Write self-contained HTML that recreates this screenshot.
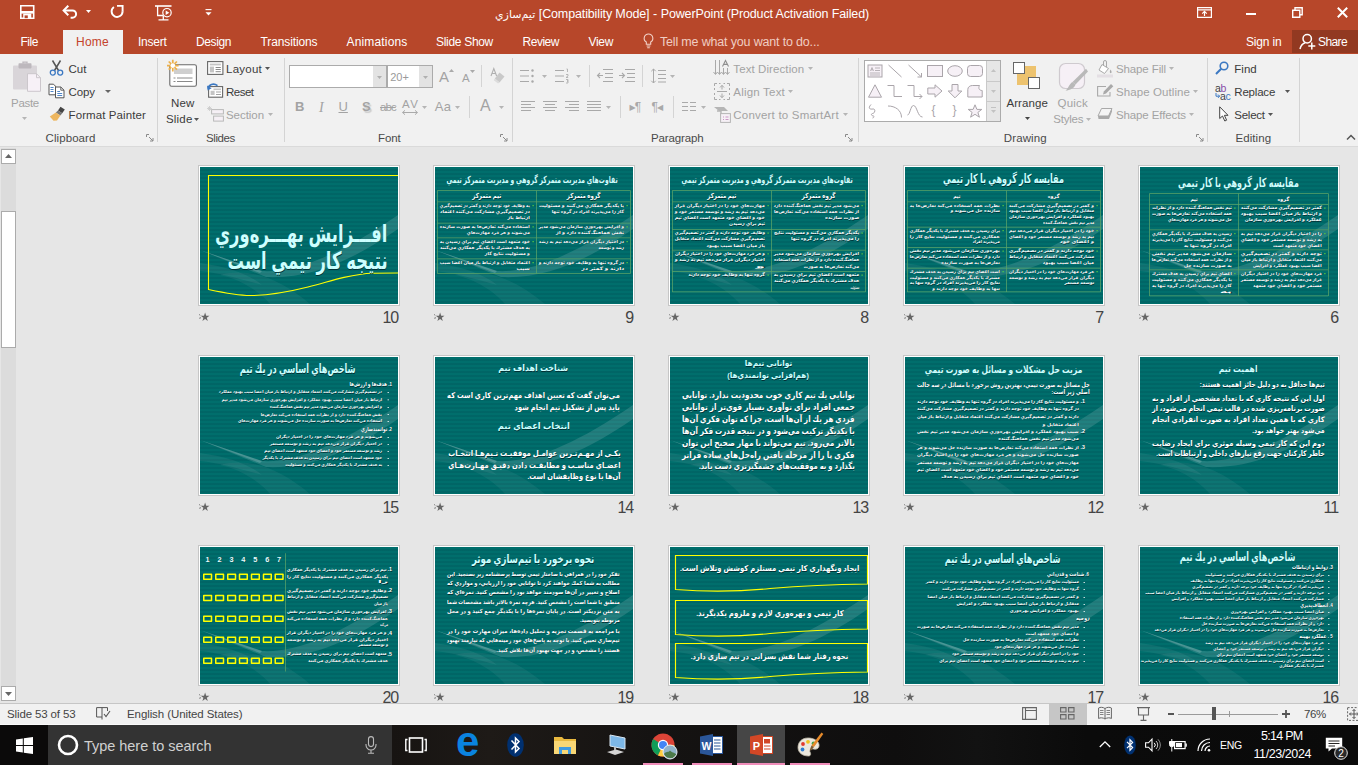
<!DOCTYPE html>
<html lang="en"><head><meta charset="utf-8"><title>PowerPoint</title>
<style>
html,body{margin:0;padding:0}
body{width:1358px;height:773px;overflow:hidden;position:relative;background:#fff;font-family:"Liberation Sans","DejaVu Sans",sans-serif;font-size:12px;color:#262626}
.a{position:absolute}
.t{position:absolute;height:20px;line-height:20px;white-space:nowrap}
.w{color:#fff}
.g{color:#a6a6a6}
.lbl{color:#444}
svg{position:absolute;overflow:visible}
.sep{position:absolute;width:1px;background:#d4d4d4}
.sl{position:absolute;width:202px;height:141px;box-sizing:border-box;border:1px solid #c6c6c6;background:#fff}
.bg{position:absolute;left:1px;top:1px;width:198px;height:137px;overflow:hidden;background:#006E6C;background-image:repeating-linear-gradient(to bottom,rgba(0,0,0,0) 0,rgba(0,0,0,0) 2px,rgba(0,30,50,.105) 2px,rgba(0,30,50,.105) 4px)}
.sw{left:0;top:0}
.in{position:absolute;left:0;top:0;width:792px;height:548px;transform:scale(.25);transform-origin:0 0;direction:rtl;font-family:"Liberation Sans","DejaVu Sans",sans-serif;font-weight:bold}
.s{position:absolute;white-space:nowrap;text-shadow:2px 2px 1px rgba(0,40,45,.85)}
.star{position:absolute;font-size:11px;line-height:12px;color:#555;font-family:"DejaVu Sans",sans-serif}
.num{position:absolute;width:100px;text-align:right;font-size:16px;line-height:20px;color:#444;letter-spacing:-1.1px}

</style></head>
<body>
<div class="a" style="left:0px;top:0px;width:1358px;height:54px;background:#B7472A"></div>
<svg style="left:20px;top:5px" width="14.5" height="14" viewBox="0 0 14.5 14"><path d="M0.8 0.8H13.7V13.2H0.8Z" fill="none" stroke="#fff" stroke-width="1.6"/><rect x="0.8" y="6" width="12.9" height="2.6" fill="#fff"/><path d="M3.2 8.6H11.3V13.2H3.2Z" fill="#fff"/><rect x="4.6" y="10.4" width="3.2" height="2.8" fill="#B7472A"/></svg>
<svg style="left:62px;top:4px" width="17" height="15" viewBox="0 0 17 15"><path d="M2 6.5H10.5A3.6 3.6 0 0 1 10.5 13.7H8.6" fill="none" stroke="#fff" stroke-width="2"/><path d="M6.3 1.7L1.6 6.5L6.3 11.3" fill="none" stroke="#fff" stroke-width="2"/></svg>
<svg style="left:86px;top:10px" width="5" height="3" viewBox="0 0 5 3"><path d="M0 0H5 L2.5 3Z" fill="#fff"/></svg>
<svg style="left:109px;top:4px" width="16" height="15" viewBox="0 0 16 15"><path d="M4.9 2.9A5.5 5.5 0 1 0 13.6 7.3" fill="none" stroke="#fff" stroke-width="1.9"/><path d="M8 1.9H13.6V7.5" fill="none" stroke="#fff" stroke-width="1.9"/></svg>
<svg style="left:155px;top:4.5px" width="18" height="16" viewBox="0 0 18 16"><path d="M0 1H16.5" stroke="#fff" stroke-width="1.6"/><path d="M2.6 1V10.5H8 M8.3 10.5V14.5 M3.5 14.8H13.5" fill="none" stroke="#fff" stroke-width="1.3"/><circle cx="12" cy="7.7" r="4.2" fill="#B7472A" stroke="#fff" stroke-width="1.2"/><path d="M10.7 5.5L14.3 7.7L10.7 9.9Z" fill="#fff"/></svg>
<svg style="left:205px;top:9px" width="7" height="8" viewBox="0 0 7 8"><path d="M0.5 0.6H6.5" stroke="#fff" stroke-width="1.1"/><path d="M0.5 3.2H6.5L3.5 6.4Z" fill="#fff"/></svg>
<span class="t" style="left:495.0px;top:4.0px;font-size:12.5px;letter-spacing:-0.130px;color:#fff;direction:ltr"><span style="font-size:11px;letter-spacing:0">تيم‌سازي</span> [Compatibility Mode] - PowerPoint (Product Activation Failed)</span>
<svg style="left:1197px;top:7px" width="15" height="11" viewBox="0 0 15 11"><path d="M0.6 0.6H14.4V10.4H0.6Z M0.6 2.8H14.4" fill="none" stroke="#fff" stroke-width="1.2"/><path d="M7.5 9V4.6 M5.2 6.6L7.5 4.4L9.8 6.6" fill="none" stroke="#fff" stroke-width="1.2"/></svg>
<div class="a" style="left:1246px;top:13px;width:10px;height:2px;background:#fff"></div>
<svg style="left:1292px;top:7px" width="11" height="11" viewBox="0 0 11 11"><path d="M0.7 3.2H7.8V10.3H0.7Z" fill="none" stroke="#fff" stroke-width="1.4"/><path d="M3 3V0.8H10.2V7.8H8" fill="none" stroke="#fff" stroke-width="1.4"/></svg>
<svg style="left:1337px;top:7px" width="11" height="11" viewBox="0 0 11 11"><path d="M0.8 0.8L10.2 10.2M10.2 0.8L0.8 10.2" stroke="#fff" stroke-width="2"/></svg>
<div class="a" style="left:63px;top:30px;width:60px;height:24px;background:#F1F1F1"></div>
<span class="t" style="left:20.5px;top:32.0px;font-size:12px;letter-spacing:-0.479px;color:#fff">File</span>
<span class="t" style="left:76.0px;top:32.0px;font-size:12px;letter-spacing:0.255px;color:#C4432B">Home</span>
<span class="t" style="left:138.0px;top:32.0px;font-size:12px;letter-spacing:-0.256px;color:#fff">Insert</span>
<span class="t" style="left:196.0px;top:32.0px;font-size:12px;letter-spacing:-0.397px;color:#fff">Design</span>
<span class="t" style="left:260.5px;top:32.0px;font-size:12px;letter-spacing:-0.113px;color:#fff">Transitions</span>
<span class="t" style="left:346.5px;top:32.0px;font-size:12px;letter-spacing:0.163px;color:#fff">Animations</span>
<span class="t" style="left:436.0px;top:32.0px;font-size:12px;letter-spacing:-0.306px;color:#fff">Slide Show</span>
<span class="t" style="left:522.5px;top:32.0px;font-size:12px;letter-spacing:-0.481px;color:#fff">Review</span>
<span class="t" style="left:588.5px;top:32.0px;font-size:12px;letter-spacing:-0.333px;color:#fff">View</span>
<svg style="left:643px;top:33px" width="11" height="16" viewBox="0 0 11 16"><path d="M5.5 1A4.3 4.3 0 0 0 3.3 9V11.2H7.7V9A4.3 4.3 0 0 0 5.5 1Z M3.6 13H7.4 M4.2 14.8H6.8" fill="none" stroke="#f3d3c9" stroke-width="1.1"/></svg>
<span class="t" style="left:660.0px;top:32.0px;font-size:12.5px;letter-spacing:-0.173px;color:#f0cdc3">Tell me what you want to do...</span>
<span class="t" style="left:1246.0px;top:32.0px;font-size:12px;letter-spacing:-0.172px;color:#fff">Sign in</span>
<div class="a" style="left:1292px;top:30px;width:66px;height:23px;background:#923921"></div>
<svg style="left:1299px;top:33px" width="17" height="17" viewBox="0 0 17 17"><circle cx="8.2" cy="5.8" r="4.2" fill="none" stroke="#fff" stroke-width="1.5"/><path d="M1 16C2 12 4.5 10.3 6.2 9.8" fill="none" stroke="#fff" stroke-width="1.5"/><path d="M12.8 9.5V16.5M9.3 13H16.3" stroke="#fff" stroke-width="1.5"/></svg>
<span class="t" style="left:1318.0px;top:32.0px;font-size:12px;letter-spacing:-0.617px;color:#fff">Share</span>
<div class="a" style="left:0px;top:54px;width:1358px;height:92px;background:#F1F1F1"></div>
<div class="a" style="left:0px;top:146px;width:1358px;height:1px;background:#DADADA"></div>
<div class="a" style="left:157px;top:58px;width:1px;height:84px;background:#D4D4D4"></div>
<div class="a" style="left:284px;top:58px;width:1px;height:84px;background:#D4D4D4"></div>
<div class="a" style="left:512px;top:58px;width:1px;height:84px;background:#D4D4D4"></div>
<div class="a" style="left:858px;top:58px;width:1px;height:84px;background:#D4D4D4"></div>
<div class="a" style="left:1207px;top:58px;width:1px;height:84px;background:#D4D4D4"></div>
<div class="a" style="left:1299px;top:58px;width:1px;height:84px;background:#D4D4D4"></div>
<span class="t" style="left:45.5px;top:128.0px;font-size:11.5px;letter-spacing:0.086px;color:#4a4a4a">Clipboard</span>
<span class="t" style="left:206.0px;top:128.0px;font-size:11.5px;letter-spacing:-0.391px;color:#4a4a4a">Slides</span>
<span class="t" style="left:378.0px;top:128.0px;font-size:11.5px;letter-spacing:-0.135px;color:#4a4a4a">Font</span>
<span class="t" style="left:651.0px;top:128.0px;font-size:11.5px;letter-spacing:-0.125px;color:#4a4a4a">Paragraph</span>
<span class="t" style="left:1003.8px;top:128.0px;font-size:11.5px;letter-spacing:0.104px;color:#4a4a4a">Drawing</span>
<span class="t" style="left:1235.5px;top:128.0px;font-size:11.5px;letter-spacing:0.077px;color:#4a4a4a">Editing</span>
<svg style="left:146px;top:134px" width="8" height="8" viewBox="0 0 8 8"><path d="M0.5 3V0.5H3 M3 3L7 7 M7 4V7H4" fill="none" stroke="#8a8a8a" stroke-width="1"/></svg>
<svg style="left:500px;top:134px" width="8" height="8" viewBox="0 0 8 8"><path d="M0.5 3V0.5H3 M3 3L7 7 M7 4V7H4" fill="none" stroke="#8a8a8a" stroke-width="1"/></svg>
<svg style="left:845px;top:134px" width="8" height="8" viewBox="0 0 8 8"><path d="M0.5 3V0.5H3 M3 3L7 7 M7 4V7H4" fill="none" stroke="#8a8a8a" stroke-width="1"/></svg>
<svg style="left:1196px;top:134px" width="8" height="8" viewBox="0 0 8 8"><path d="M0.5 3V0.5H3 M3 3L7 7 M7 4V7H4" fill="none" stroke="#8a8a8a" stroke-width="1"/></svg>
<svg style="left:1346px;top:134px" width="10" height="7" viewBox="0 0 10 7"><path d="M1 5.5L5 1.5L9 5.5" fill="none" stroke="#555" stroke-width="1.5"/></svg>
<svg style="left:12px;top:61px" width="30" height="32" viewBox="0 0 30 32"><rect x="1" y="4.5" width="24" height="24" rx="1" fill="#D9D5D9"/><rect x="6.5" y="2.2" width="13" height="5.2" rx="0.8" fill="#BDB8BD"/><path d="M11 2.5V1.2H15V2.5" fill="none" stroke="#BDB8BD" stroke-width="1.3"/><path d="M15.5 12.7H24.5L28.5 16.7V30.3H15.5Z" fill="#F7F1F7" stroke="#CCC7CC" stroke-width="1"/><path d="M24.5 12.7V16.7H28.5" fill="none" stroke="#CCC7CC" stroke-width="1"/></svg>
<span class="t" style="left:11.0px;top:93.0px;font-size:11.5px;letter-spacing:-0.285px;color:#a3a3a3">Paste</span>
<svg style="left:22px;top:116.5px" width="5" height="3" viewBox="0 0 5 3"><path d="M0 0H5 L2.5 3Z" fill="#b5b5b5"/></svg>
<svg style="left:49px;top:60px" width="15" height="16" viewBox="0 0 15 16"><path d="M3.5 0.5L9.5 10.5 M11.5 0.5L5.5 10.5" stroke="#555" stroke-width="1.5"/><circle cx="3.8" cy="12.6" r="2.5" fill="none" stroke="#3B78C2" stroke-width="1.3"/><circle cx="11.2" cy="12.6" r="2.5" fill="none" stroke="#3B78C2" stroke-width="1.3"/></svg>
<span class="t" style="left:68.5px;top:59.0px;font-size:11.5px;letter-spacing:0.039px;color:#3b3b3b">Cut</span>
<svg style="left:48px;top:83px" width="17" height="16" viewBox="0 0 17 16"><path d="M1 1.2H5.5L7.5 3.2V11.8H1Z" fill="#fff" stroke="#555" stroke-width="1"/><path d="M2.5 4.5H5.5M2.5 6.5H5.5M2.5 8.5H5.5" stroke="#3B78C2" stroke-width="0.9"/><path d="M7.5 4H12.8L16 7.2V14.8H7.5Z" fill="#fff" stroke="#555" stroke-width="1"/><path d="M12.8 4V7.2H16" fill="none" stroke="#555" stroke-width="0.9"/><path d="M9.3 8.5H12M9.3 10.5H14.2M9.3 12.5H14.2" stroke="#3B78C2" stroke-width="0.9"/></svg>
<span class="t" style="left:68.5px;top:82.0px;font-size:11.5px;letter-spacing:-0.094px;color:#3b3b3b">Copy</span>
<svg style="left:105px;top:90px" width="6" height="3" viewBox="0 0 6 3"><path d="M0 0H6 L3 3Z" fill="#666"/></svg>
<svg style="left:49px;top:106px" width="17" height="16" viewBox="0 0 17 16"><path d="M11.5 0.8L15.8 3.6L13.2 7.2L9 4.4Z" fill="#444"/><path d="M9 4.4L13.2 7.2L11.4 9.4L6.8 6.6Z" fill="#777"/><path d="M6.8 6.6L11.4 9.4L8 14.5L4.5 14.8L0.8 10.4Z" fill="#EDB65F"/></svg>
<span class="t" style="left:68.5px;top:105.0px;font-size:11.5px;letter-spacing:0.103px;color:#3b3b3b">Format Painter</span>
<svg style="left:165px;top:59px" width="34" height="34" viewBox="0 0 34 34"><rect x="4.8" y="5.8" width="26.6" height="21.4" rx="1.8" fill="#fff" stroke="#6a6a6a" stroke-width="1.1"/><rect x="9" y="9.5" width="18.5" height="5.5" fill="#cfcfcf"/><path d="M8.5 19H10.5 M12 19H27.5 M8.5 22.5H10.5 M12 22.5H27.5" stroke="#8a8a8a" stroke-width="1"/><g stroke="#EDB04A" stroke-width="1.7"><path d="M7.8 0.8V12.4M2 6.6H13.6M3.7 2.5L11.9 10.7M11.9 2.5L3.7 10.7"/></g><circle cx="7.8" cy="6.6" r="2.3" fill="#fff"/></svg>
<span class="t" style="left:171.0px;top:93.0px;font-size:11.5px;letter-spacing:0.180px;color:#3b3b3b">New</span>
<span class="t" style="left:166.0px;top:109.0px;font-size:11.5px;letter-spacing:0.188px;color:#3b3b3b">Slide</span>
<svg style="left:194px;top:117.5px" width="5" height="3" viewBox="0 0 5 3"><path d="M0 0H5 L2.5 3Z" fill="#555"/></svg>
<svg style="left:207px;top:61px" width="17" height="14" viewBox="0 0 17 14"><rect x="0.6" y="0.6" width="15.3" height="12.8" fill="#fff" stroke="#666" stroke-width="1.1"/><rect x="2.8" y="2.6" width="11" height="1.8" fill="#c4c4c4"/><rect x="2.8" y="5.6" width="4.2" height="5.8" fill="#c4c4c4"/><path d="M8.6 6.5H13.8 M8.6 8.5H13.8 M8.6 10.7H13.8" stroke="#8a8a8a" stroke-width="1"/></svg>
<span class="t" style="left:226.0px;top:59.0px;font-size:11.5px;letter-spacing:0.247px;color:#3b3b3b">Layout</span>
<svg style="left:265px;top:67px" width="5" height="3" viewBox="0 0 5 3"><path d="M0 0H5 L2.5 3Z" fill="#555"/></svg>
<svg style="left:207px;top:82px" width="17" height="16" viewBox="0 0 17 16"><rect x="1.6" y="4.6" width="14" height="10.6" fill="#fff" stroke="#666" stroke-width="1.1"/><rect x="6.5" y="6.5" width="7.5" height="1.6" fill="#c4c4c4"/><rect x="3.6" y="8.8" width="4" height="4.2" fill="#c4c4c4"/><path d="M9 10H14 M9 12.5H14" stroke="#999" stroke-width="0.9"/><path d="M1.3 6.5C1.5 2.5 6.5 0.8 10.5 3.6" fill="none" stroke="#3B78C2" stroke-width="1.7"/><path d="M0 3.5L0.6 8.6L4.6 6.2Z" fill="#3B78C2"/></svg>
<span class="t" style="left:226.0px;top:82.0px;font-size:11.5px;letter-spacing:-0.520px;color:#3b3b3b">Reset</span>
<svg style="left:207px;top:106px" width="17" height="16" viewBox="0 0 17 16"><rect x="4.6" y="3.6" width="11.8" height="4.3" fill="#f6f0f6" stroke="#b9b9b9" stroke-width="1"/><rect x="6.6" y="10.1" width="9.8" height="5" fill="#f6f0f6" stroke="#b9b9b9" stroke-width="1"/><path d="M2.5 0V5M0 2.5H5M0.8 0.8L4.2 4.2M4.2 0.8L0.8 4.2" stroke="#c9c9c9" stroke-width="0.8"/></svg>
<span class="t" style="left:226.0px;top:105.0px;font-size:11.5px;letter-spacing:-0.052px;color:#a3a3a3">Section</span>
<svg style="left:268px;top:113px" width="5" height="3" viewBox="0 0 5 3"><path d="M0 0H5 L2.5 3Z" fill="#b5b5b5"/></svg>
<div class="a" style="left:289px;top:65px;width:98px;height:23px;background:#fff;border:1px solid #ababab;box-sizing:border-box"></div>
<div class="a" style="left:373px;top:66px;width:13px;height:21px;background:#e3e3e3"></div>
<svg style="left:377px;top:75.5px" width="5" height="3" viewBox="0 0 5 3"><path d="M0 0H5 L2.5 3Z" fill="#b0b0b0"/></svg>
<div class="a" style="left:387px;top:65px;width:46px;height:23px;background:#fff;border:1px solid #ababab;box-sizing:border-box"></div>
<div class="a" style="left:419px;top:66px;width:13px;height:21px;background:#e3e3e3"></div>
<svg style="left:423px;top:75.5px" width="5" height="3" viewBox="0 0 5 3"><path d="M0 0H5 L2.5 3Z" fill="#b0b0b0"/></svg>
<span class="t" style="left:390.2px;top:66.5px;font-size:11px;letter-spacing:-0.022px;color:#9a9a9a">20+</span>
<span class="t" style="left:439.0px;top:67.0px;font-size:15px;letter-spacing:0.000px;color:#a3a3a3">A</span>
<svg style="left:449px;top:69px" width="5" height="3" viewBox="0 0 5 3"><path d="M0 3H5L2.5 0Z" fill="#aaa"/></svg>
<span class="t" style="left:462.0px;top:68.0px;font-size:11.5px;letter-spacing:0.000px;color:#a3a3a3">A</span>
<svg style="left:470px;top:70px" width="5" height="3" viewBox="0 0 5 3"><path d="M0 0H5L2.5 3Z" fill="#aaa"/></svg>
<div class="a" style="left:481px;top:65px;width:1px;height:22px;background:#d4d4d4"></div>
<svg style="left:490px;top:67px" width="16" height="17" viewBox="0 0 16 17"><path d="M1 9L3.8 1.5L6.6 9M2 6.5H5.6" fill="none" stroke="#b0b0b0" stroke-width="1.1"/><path d="M9.5 5.5L14.5 9.5L9.5 15.5L4.8 11.6Z" fill="#c9c9c9"/><path d="M4.8 11.6L9.5 15.5L8 16.5L3.8 13.2Z" fill="#dcdcdc"/></svg>
<span class="t" style="left:295.0px;top:97.0px;font-size:13px;letter-spacing:0.000px;color:#a3a3a3"><b>B</b></span>
<span class="t" style="left:319.0px;top:97.0px;font-size:14px;letter-spacing:0.000px;color:#a3a3a3"><i style="font-family:'Liberation Serif',serif">I</i></span>
<span class="t" style="left:338.5px;top:97.0px;font-size:13px;letter-spacing:0.000px;color:#a3a3a3"><u>U</u></span>
<span class="t" style="left:362.0px;top:97.0px;font-size:13px;letter-spacing:0.000px;color:#a3a3a3"><b style="text-shadow:1.5px 1.5px 1px #ccc">S</b></span>
<span class="t" style="left:380.0px;top:97.0px;font-size:11.5px;letter-spacing:-0.934px;color:#a3a3a3"><s>abc</s></span>
<span class="t" style="left:402.0px;top:94.0px;font-size:11.5px;letter-spacing:1.500px;color:#a3a3a3">AV</span>
<svg style="left:402px;top:110px" width="16" height="5" viewBox="0 0 16 5"><path d="M0.5 2.5H15.5M3 0.3L0.6 2.5L3 4.7M13 0.3L15.4 2.5L13 4.7" fill="none" stroke="#aaa" stroke-width="1"/></svg>
<svg style="left:422px;top:105.5px" width="5" height="3" viewBox="0 0 5 3"><path d="M0 0H5 L2.5 3Z" fill="#b5b5b5"/></svg>
<span class="t" style="left:434.8px;top:97.0px;font-size:13px;letter-spacing:0.303px;color:#a3a3a3">Aa</span>
<svg style="left:455px;top:105.5px" width="5" height="3" viewBox="0 0 5 3"><path d="M0 0H5 L2.5 3Z" fill="#b5b5b5"/></svg>
<div class="a" style="left:469px;top:96px;width:1px;height:22px;background:#d4d4d4"></div>
<span class="t" style="left:480.0px;top:96.0px;font-size:16px;letter-spacing:0.000px;color:#a3a3a3">A</span>
<svg style="left:499px;top:105.5px" width="5" height="3" viewBox="0 0 5 3"><path d="M0 0H5 L2.5 3Z" fill="#b5b5b5"/></svg>
<svg style="left:520px;top:68px" width="16" height="16" viewBox="0 0 16 16"><path d="M0 2.5H9M0 8H9M0 13.5H9" stroke="#a9a9a9" stroke-width="1"/><circle cx="12.5" cy="2.5" r="1.2" fill="#a9a9a9"/><circle cx="12.5" cy="8" r="1.2" fill="#a9a9a9"/><circle cx="12.5" cy="13.5" r="1.2" fill="#a9a9a9"/></svg>
<svg style="left:542px;top:74.5px" width="5" height="3" viewBox="0 0 5 3"><path d="M0 0H5 L2.5 3Z" fill="#b5b5b5"/></svg>
<svg style="left:555px;top:68px" width="16" height="16" viewBox="0 0 16 16"><path d="M0 2.5H9M0 8H9M0 13.5H9" stroke="#a9a9a9" stroke-width="1"/><path d="M11.5 1H12.5V4M11 6.5H13V8L11 9.5H13.2M11 11.5H13V13H12 13V15H11" stroke="#a9a9a9" stroke-width="0.8" fill="none"/></svg>
<svg style="left:576px;top:74.5px" width="5" height="3" viewBox="0 0 5 3"><path d="M0 0H5 L2.5 3Z" fill="#b5b5b5"/></svg>
<div class="a" style="left:589px;top:65px;width:1px;height:22px;background:#d4d4d4"></div>
<svg style="left:597px;top:69px" width="16" height="14" viewBox="0 0 16 14"><path d="M6 0.5H16M8 4.5H16M8 8.5H16M6 12.5H16" stroke="#a9a9a9" stroke-width="1"/><path d="M0.5 6.5H6M3 4L0.5 6.5L3 9" fill="none" stroke="#a9a9a9" stroke-width="1.1"/></svg>
<svg style="left:619px;top:69px" width="16" height="14" viewBox="0 0 16 14"><path d="M6 0.5H16M8 4.5H16M8 8.5H16M6 12.5H16" stroke="#a9a9a9" stroke-width="1"/><path d="M0 6.5H5.5M3 4L5.5 6.5L3 9" fill="none" stroke="#a9a9a9" stroke-width="1.1"/></svg>
<div class="a" style="left:642px;top:65px;width:1px;height:22px;background:#d4d4d4"></div>
<svg style="left:651px;top:68px" width="15" height="16" viewBox="0 0 15 16"><path d="M7 2.5H15M7 6.5H15M7 10.5H15M7 14H15" stroke="#a9a9a9" stroke-width="1"/><path d="M2.5 1V15M0.3 3.2L2.5 1L4.7 3.2M0.3 12.8L2.5 15L4.7 12.8" fill="none" stroke="#a9a9a9" stroke-width="1"/></svg>
<svg style="left:670px;top:74.5px" width="5" height="3" viewBox="0 0 5 3"><path d="M0 0H5 L2.5 3Z" fill="#b5b5b5"/></svg>
<svg style="left:521px;top:100px" width="16" height="16" viewBox="0 0 16 16"><path d="M0 1.5H14M0 4.5H10M0 7.5H14M0 10.5H10" stroke="#a9a9a9" stroke-width="1" fill="none"/></svg>
<svg style="left:543px;top:100px" width="16" height="16" viewBox="0 0 16 16"><path d="M0 1.5H14M2 4.5H12M0 7.5H14M2 10.5H12" stroke="#a9a9a9" stroke-width="1" fill="none"/></svg>
<svg style="left:565px;top:100px" width="16" height="16" viewBox="0 0 16 16"><path d="M0 1.5H14M4 4.5H14M0 7.5H14M4 10.5H14" stroke="#a9a9a9" stroke-width="1" fill="none"/></svg>
<svg style="left:587px;top:100px" width="16" height="16" viewBox="0 0 16 16"><path d="M0 1.5H14M0 4.5H14M0 7.5H14M0 10.5H14" stroke="#a9a9a9" stroke-width="1" fill="none"/></svg>
<svg style="left:606px;top:105.5px" width="5" height="3" viewBox="0 0 5 3"><path d="M0 0H5 L2.5 3Z" fill="#b5b5b5"/></svg>
<div class="a" style="left:620px;top:96px;width:1px;height:22px;background:#d4d4d4"></div>
<span class="t" style="left:629.5px;top:97.0px;font-size:12px;letter-spacing:0.000px;color:#a9a9a9;letter-spacing:-1px"><span style="font-size:8px;vertical-align:1px">&#9654;</span>&#182;</span>
<span class="t" style="left:651.5px;top:97.0px;font-size:12px;letter-spacing:0.000px;color:#a9a9a9;letter-spacing:-1px">&#182;<span style="font-size:8px;vertical-align:1px">&#9664;</span></span>
<div class="a" style="left:673px;top:96px;width:1px;height:22px;background:#d4d4d4"></div>
<svg style="left:682px;top:101px" width="14" height="12" viewBox="0 0 14 12"><path d="M0 1.5H6M8 1.5H14M0 5.5H6M8 5.5H14M0 9.5H6M8 9.5H14" stroke="#a9a9a9" stroke-width="1"/></svg>
<svg style="left:701px;top:105.5px" width="5" height="3" viewBox="0 0 5 3"><path d="M0 0H5 L2.5 3Z" fill="#b5b5b5"/></svg>
<svg style="left:714px;top:60px" width="16" height="17" viewBox="0 0 16 17"><path d="M1.5 0V14M-0.5 12L1.5 14.5L3.5 12M5.5 0V14M3.5 12L5.5 14.5L7.5 12M9.5 8V14M7.5 12L9.5 14.5L11.5 12M13.5 8V14M11.5 12L13.5 14.5L15.5 12" fill="none" stroke="#a9a9a9" stroke-width="1"/><path d="M8.5 6.5L11.5 0.5L14.5 6.5M9.6 4.4H13.4" fill="none" stroke="#8f8f8f" stroke-width="1.1"/></svg>
<span class="t" style="left:733.3px;top:59.0px;font-size:11.5px;letter-spacing:0.095px;color:#a3a3a3">Text Direction</span>
<svg style="left:808px;top:67px" width="5" height="3" viewBox="0 0 5 3"><path d="M0 0H5 L2.5 3Z" fill="#b5b5b5"/></svg>
<svg style="left:714px;top:83px" width="16" height="17" viewBox="0 0 16 17"><path d="M0.5 3V0.5H3M5 0.5H6.5M9.5 0.5H11M13 0.5H15.5V3M15.5 5V7M15.5 10V12M15.5 14V16.5H13M11 16.5H9.5M6.5 16.5H5M3 16.5H0.5V14M0.5 12V10M0.5 7V5" fill="none" stroke="#a9a9a9" stroke-width="1"/><path d="M3 8.5H13M8 2.5V6.5M6 4.5L8 2.3L10 4.5M8 14.5V10.5M6 12.5L8 14.7L10 12.5" fill="none" stroke="#a9a9a9" stroke-width="1"/></svg>
<span class="t" style="left:733.3px;top:82.0px;font-size:11.5px;letter-spacing:0.206px;color:#a3a3a3">Align Text</span>
<svg style="left:788px;top:90px" width="5" height="3" viewBox="0 0 5 3"><path d="M0 0H5 L2.5 3Z" fill="#b5b5b5"/></svg>
<svg style="left:714px;top:106px" width="17" height="17" viewBox="0 0 17 17"><path d="M0 1H10L14 5H5Z" fill="#b5b5b5"/><path d="M3 5H7V10" fill="none" stroke="#b5b5b5" stroke-width="1.4"/><rect x="6.6" y="7.6" width="9.8" height="8.8" fill="#f6f0f6" stroke="#b5b5b5" stroke-width="1"/><path d="M9 11H10M11.5 11H14.5M9 13.5H10M11.5 13.5H14.5" stroke="#c58fc0" stroke-width="0.9"/></svg>
<span class="t" style="left:733.3px;top:105.0px;font-size:11.5px;letter-spacing:0.204px;color:#a3a3a3">Convert to SmartArt</span>
<svg style="left:842.5px;top:113px" width="5" height="3" viewBox="0 0 5 3"><path d="M0 0H5 L2.5 3Z" fill="#b5b5b5"/></svg>
<div class="a" style="left:864px;top:60px;width:137px;height:62px;background:#fff;border:1px solid #ababab;box-sizing:border-box"></div>
<div class="a" style="left:987px;top:61px;width:13px;height:60px;background:#e6e6e6"></div>
<div class="a" style="left:986px;top:61px;width:1px;height:60px;background:#c9c9c9"></div>
<div class="a" style="left:987px;top:81px;width:13px;height:1px;background:#c9c9c9"></div>
<div class="a" style="left:987px;top:101px;width:13px;height:1px;background:#c9c9c9"></div>
<svg style="left:991px;top:69px" width="5" height="3" viewBox="0 0 5 3"><path d="M0 3H5L2.5 0Z" fill="#c2c2c2"/></svg>
<svg style="left:991px;top:90px" width="5" height="3" viewBox="0 0 5 3"><path d="M0 0H5L2.5 3Z" fill="#c2c2c2"/></svg>
<svg style="left:991px;top:107px" width="5" height="7" viewBox="0 0 5 7"><path d="M0 0.5H5" stroke="#c2c2c2"/><path d="M0 3H5L2.5 6Z" fill="#c2c2c2"/></svg>
<svg style="left:866.5px;top:63.5px" width="16" height="14" viewBox="0 0 16 14"><rect x="1" y="1" width="14" height="12" fill="#f6f0f6" stroke="#aaa5aa" stroke-width="1"/><path d="M3.5 7L5 3.5L6.5 7M4 5.8H6M8 4H13M8 6.5H13M3 9H13M3 11H13" fill="none" stroke="#aaa5aa" stroke-width="0.8"/></svg>
<svg style="left:886.8px;top:63.5px" width="16" height="14" viewBox="0 0 16 14"><path d="M1.5 1L14.5 13" fill="none" stroke="#aaa5aa" stroke-width="1"/></svg>
<svg style="left:906.8px;top:63.5px" width="16" height="14" viewBox="0 0 16 14"><path d="M1.5 1L14.5 13M14.5 9V13H10.5" fill="none" stroke="#aaa5aa" stroke-width="1"/></svg>
<svg style="left:926.8px;top:63.5px" width="16" height="14" viewBox="0 0 16 14"><rect x="0.5" y="1.5" width="15" height="11" fill="#f6f0f6" stroke="#aaa5aa" stroke-width="1"/></svg>
<svg style="left:946.6px;top:63.5px" width="16" height="14" viewBox="0 0 16 14"><ellipse cx="8" cy="7" rx="7.3" ry="5.3" fill="#f6f0f6" stroke="#aaa5aa" stroke-width="1"/></svg>
<svg style="left:966.9px;top:63.5px" width="16" height="14" viewBox="0 0 16 14"><rect x="0.5" y="1.5" width="15" height="11" rx="3" fill="#f6f0f6" stroke="#aaa5aa" stroke-width="1"/></svg>
<svg style="left:866.5px;top:83.8px" width="16" height="14" viewBox="0 0 16 14"><path d="M8 0.8L14.5 13.2H1.5Z" fill="#f6f0f6" stroke="#aaa5aa" stroke-width="1"/></svg>
<svg style="left:886.8px;top:83.8px" width="16" height="14" viewBox="0 0 16 14"><path d="M0.5 1.5H7V12.5H15" fill="none" stroke="#aaa5aa" stroke-width="1"/></svg>
<svg style="left:906.8px;top:83.8px" width="16" height="14" viewBox="0 0 16 14"><path d="M0.5 1.5H7V12.5H15M12.5 10L15 12.5L12.5 15" fill="none" stroke="#aaa5aa" stroke-width="1"/></svg>
<svg style="left:926.8px;top:83.8px" width="16" height="14" viewBox="0 0 16 14"><path d="M0.8 4H8V0.8L15 7L8 13.2V10H0.8Z" fill="#f6f0f6" stroke="#aaa5aa" stroke-width="1"/></svg>
<svg style="left:946.6px;top:83.8px" width="16" height="14" viewBox="0 0 16 14"><path d="M5 0.5H11V7H14.8L8 13.8L1.2 7H5Z" fill="#f6f0f6" stroke="#aaa5aa" stroke-width="1"/></svg>
<svg style="left:966.9px;top:83.8px" width="16" height="14" viewBox="0 0 16 14"><path d="M0.8 13V5.5C0.8 3 3 1.5 5.5 1.5H12.5C11 4.5 12.5 6.5 15.2 6.5V13Z" fill="#f6f0f6" stroke="#aaa5aa" stroke-width="1"/></svg>
<svg style="left:866.5px;top:103.8px" width="16" height="14" viewBox="0 0 16 14"><path d="M4 0.5C0.5 4.5 3 5.5 6 5C9 4.7 8 9.5 5.5 9.5C4 9.5 4 11.8 6 11.8C7.5 11.8 7 14 5.5 14" fill="none" stroke="#aaa5aa" stroke-width="1"/></svg>
<svg style="left:886.8px;top:103.8px" width="16" height="14" viewBox="0 0 16 14"><path d="M1 2C8 2 14.5 6 14.5 13.5" fill="none" stroke="#aaa5aa" stroke-width="1"/></svg>
<svg style="left:906.8px;top:103.8px" width="16" height="14" viewBox="0 0 16 14"><path d="M0.5 11C3 11 3.5 1.5 6.5 1.5C10 1.5 10.5 13 15.5 13" fill="none" stroke="#aaa5aa" stroke-width="1"/></svg>
<span class="t" style="left:931.5px;top:100.0px;font-size:12px;letter-spacing:0.000px;color:#aaa5aa">{</span>
<span class="t" style="left:952.5px;top:100.0px;font-size:12px;letter-spacing:0.000px;color:#aaa5aa">}</span>
<svg style="left:966.9px;top:103.8px" width="16" height="14" viewBox="0 0 16 14"><path d="M8 0.8L9.9 5.4H14.8L10.9 8.4L12.4 13.2L8 10.3L3.6 13.2L5.1 8.4L1.2 5.4H6.1Z" fill="#f6f0f6" stroke="#aaa5aa" stroke-width="1"/></svg>
<div class="a" style="left:1017px;top:66px;width:19px;height:19px;background:#EDC36F"></div>
<div class="a" style="left:1013px;top:62px;width:12px;height:12px;background:#fff;border:1px solid #666;box-sizing:border-box"></div>
<div class="a" style="left:1028px;top:77px;width:12px;height:12px;background:#fff;border:1px solid #666;box-sizing:border-box"></div>
<span class="t" style="left:1006.4px;top:93.0px;font-size:11.5px;letter-spacing:0.097px;color:#3b3b3b">Arrange</span>
<svg style="left:1025px;top:117px" width="5" height="3" viewBox="0 0 5 3"><path d="M0 0H5 L2.5 3Z" fill="#444"/></svg>
<svg style="left:1058px;top:62px" width="32" height="30" viewBox="0 0 32 30"><rect x="1.5" y="1.5" width="25" height="25" rx="6" fill="#f6f0f6" stroke="#cfcacf" stroke-width="1.2"/><path d="M30 9.5L17.5 22.5L14.5 20L28 6.8Z" fill="#b9b9b9"/><path d="M14.5 20L17.5 22.5C16.5 26 12 28.5 7.5 28.5C10.5 26.5 11 22 14.5 20Z" fill="#b9b9b9"/></svg>
<span class="t" style="left:1057.6px;top:93.0px;font-size:11.5px;letter-spacing:0.162px;color:#a3a3a3">Quick</span>
<span class="t" style="left:1053.3px;top:109.0px;font-size:11.5px;letter-spacing:-0.222px;color:#a3a3a3">Styles</span>
<svg style="left:1086px;top:117.5px" width="5" height="3" viewBox="0 0 5 3"><path d="M0 0H5 L2.5 3Z" fill="#b5b5b5"/></svg>
<svg style="left:1097px;top:60px" width="17" height="17" viewBox="0 0 17 17"><path d="M5 4.5L11.5 8.5L7.5 13.5L2 10Z" fill="#fff" stroke="#a9a9a9" stroke-width="1"/><path d="M6.5 5V2A1.5 1.5 0 0 1 9.5 2V7" fill="none" stroke="#a9a9a9" stroke-width="1"/><path d="M13.5 9.5C14.8 11.5 15 12.8 13.8 13.2C12.5 13 12.5 11.5 13.5 9.5Z" fill="#a9a9a9"/><rect x="0" y="14.5" width="16" height="3" fill="#e4dfe4"/></svg>
<span class="t" style="left:1115.9px;top:59.0px;font-size:11.5px;letter-spacing:-0.104px;color:#a3a3a3">Shape Fill</span>
<svg style="left:1169px;top:67px" width="5" height="3" viewBox="0 0 5 3"><path d="M0 0H5 L2.5 3Z" fill="#b5b5b5"/></svg>
<svg style="left:1097px;top:83px" width="17" height="17" viewBox="0 0 17 17"><path d="M9 3.5H0.6V13H13V9" fill="none" stroke="#a9a9a9" stroke-width="1.1"/><path d="M14 1L16.3 3.3L9 10.6L6 11.6L6.8 8.4Z" fill="#a9a9a9"/></svg>
<span class="t" style="left:1115.9px;top:82.0px;font-size:11.5px;letter-spacing:0.101px;color:#a3a3a3">Shape Outline</span>
<svg style="left:1193px;top:90px" width="5" height="3" viewBox="0 0 5 3"><path d="M0 0H5 L2.5 3Z" fill="#b5b5b5"/></svg>
<svg style="left:1097px;top:107px" width="17" height="14" viewBox="0 0 17 14"><path d="M4.5 1.5H15L11.5 9H1Z" fill="#f4f4f4" stroke="#a9a9a9" stroke-width="1"/><path d="M1 9H11.5L15 1.5V4.5L12 12H1.5Z" fill="#a9a9a9"/></svg>
<span class="t" style="left:1115.9px;top:105.0px;font-size:11.5px;letter-spacing:-0.108px;color:#a3a3a3">Shape Effects</span>
<svg style="left:1189px;top:113px" width="5" height="3" viewBox="0 0 5 3"><path d="M0 0H5 L2.5 3Z" fill="#b5b5b5"/></svg>
<svg style="left:1215px;top:61px" width="15" height="14" viewBox="0 0 15 14"><circle cx="9" cy="5" r="3.8" fill="none" stroke="#3B78C2" stroke-width="1.6"/><path d="M6.2 7.8L1 13" stroke="#3B78C2" stroke-width="2"/></svg>
<span class="t" style="left:1234.3px;top:59.0px;font-size:11.5px;letter-spacing:0.004px;color:#3b3b3b">Find</span>
<span class="t" style="left:1215.0px;top:77.5px;font-size:10.5px;letter-spacing:0.000px;color:#444;letter-spacing:-0.3px">a<span style="color:#8A4FA8">b</span></span>
<span class="t" style="left:1220.0px;top:85.5px;font-size:10.5px;letter-spacing:0.000px;color:#444;letter-spacing:-0.3px">a<span style="color:#3B78C2">c</span></span>
<svg style="left:1215px;top:93px" width="5" height="5" viewBox="0 0 5 5"><path d="M1 0V3.2H4.5M3 1.5L4.7 3.2L3 4.9" fill="none" stroke="#3B78C2" stroke-width="1"/></svg>
<span class="t" style="left:1234.3px;top:82.0px;font-size:11.5px;letter-spacing:-0.202px;color:#3b3b3b">Replace</span>
<svg style="left:1285px;top:90px" width="5" height="3" viewBox="0 0 5 3"><path d="M0 0H5 L2.5 3Z" fill="#555"/></svg>
<svg style="left:1219px;top:106px" width="10" height="16" viewBox="0 0 10 16"><path d="M0.7 0.8V12.5L3.5 10L5.8 15L7.6 14.2L5.4 9.3H9Z" fill="#fff" stroke="#444" stroke-width="1"/></svg>
<span class="t" style="left:1234.3px;top:105.0px;font-size:11.5px;letter-spacing:-0.247px;color:#3b3b3b">Select</span>
<svg style="left:1268px;top:113px" width="5" height="3" viewBox="0 0 5 3"><path d="M0 0H5 L2.5 3Z" fill="#555"/></svg>
<div class="a" style="left:0px;top:147px;width:1358px;height:557px;background:#E6E6E6"></div>
<div class="a" style="left:1px;top:148px;width:15px;height:553px;background:#DCDCDC"></div>
<div class="a" style="left:1px;top:149px;width:15px;height:15px;background:#fff;border:1px solid #ababab;box-sizing:border-box"></div>
<svg style="left:5px;top:154px" width="7" height="4" viewBox="0 0 7 4"><path d="M0 4H7L3.5 0Z" fill="#666"/></svg>
<div class="a" style="left:1px;top:211px;width:15px;height:137px;background:#fff;border:1px solid #ababab;box-sizing:border-box"></div>
<div class="a" style="left:1px;top:686px;width:15px;height:15px;background:#fff;border:1px solid #ababab;box-sizing:border-box"></div>
<svg style="left:5px;top:692px" width="7" height="4" viewBox="0 0 7 4"><path d="M0 0H7L3.5 4Z" fill="#666"/></svg>
<div class="sl" style="left:198px;top:165px"><div class="bg"><svg class="sw" width="198" height="137" viewBox="0 0 198 137"><path d="M0 83 L62 104 C 95 106, 140 88, 198 48 L198 62 C 150 95, 110 112, 66 110 Z" fill="#fff" fill-opacity="0.13"/><path d="M0 83 L62 104 L60 106 Z" fill="#fff" fill-opacity="0.18"/><path d="M20 108 C 50 100, 80 112, 110 137 L 70 137 C 60 125, 40 112, 20 108 Z" fill="#fff" fill-opacity="0.05"/><path d="M0 96 C 30 100, 50 108, 62 118 C 40 112, 20 106, 0 104 Z" fill="#fff" fill-opacity="0.06"/></svg><svg class="sw" width="198" height="137" viewBox="0 0 198 137"><path d="M198 8.5H8.5V122.5 C 25 126, 38 128.5, 50 128.5 C 70 128.5, 90 124.5, 108 120 C 125 115.5, 135 112.5, 144 110.4 C 155 108, 163 106.5, 172 106.3 C 180 106.1, 190 106, 198 106" fill="none" stroke="#FFFF00" stroke-width="1.1"/></svg><div class="in"><span class="s" style="right:42.0px;transform-origin:100% 50%;top:203.2px;font-size:96.6px;line-height:126px;color:#CCFFFF;transform:scaleX(0.684);">افـــزايش بهـــره‌وري</span><span class="s" style="right:42.0px;transform-origin:100% 50%;top:313.2px;font-size:96.6px;line-height:126px;color:#CCFFFF;transform:scaleX(0.681);">نتيجه كار تيمي است</span></div></div></div>
<svg style="left:199px;top:312px" width="11" height="10" viewBox="0 0 11 10"><path d="M6.1 0.6L7.2 3.7H10.5L7.8 5.7L8.8 8.9L6.1 7L3.4 8.9L4.4 5.7L1.7 3.7H5Z" fill="#666"/><path d="M0.3 2.6L1.2 3.3M0.4 6.2L1.8 5.8" stroke="#555" stroke-width="1"/></svg>
<span class="num" style="left:298px;top:308px">10</span>
<div class="sl" style="left:433px;top:165px"><div class="bg"><svg class="sw" width="198" height="137" viewBox="0 0 198 137"><path d="M0 83 L62 104 C 95 106, 140 88, 198 48 L198 62 C 150 95, 110 112, 66 110 Z" fill="#fff" fill-opacity="0.13"/><path d="M0 83 L62 104 L60 106 Z" fill="#fff" fill-opacity="0.18"/><path d="M20 108 C 50 100, 80 112, 110 137 L 70 137 C 60 125, 40 112, 20 108 Z" fill="#fff" fill-opacity="0.05"/><path d="M0 96 C 30 100, 50 108, 62 118 C 40 112, 20 106, 0 104 Z" fill="#fff" fill-opacity="0.06"/></svg><div class="in"><span class="s" style="right:60.4px;transform-origin:100% 50%;top:22.6px;font-size:39.1px;line-height:51px;color:#CCFFFF;transform:scaleX(0.627);">تفاوت‌هاي مديريت متمركز گروهي و مديريت متمركز تيمي</span><div class="a" style="left:9.2px;top:92.5px;width:773.2px;height:3px;background:#5AA468"></div><div class="a" style="left:9.2px;top:138.1px;width:773.2px;height:3px;background:#5AA468"></div><div class="a" style="left:9.2px;top:222.9px;width:773.2px;height:3px;background:#5AA468"></div><div class="a" style="left:9.2px;top:282.1px;width:773.2px;height:3px;background:#5AA468"></div><div class="a" style="left:9.2px;top:365.7px;width:773.2px;height:3px;background:#5AA468"></div><div class="a" style="left:9.2px;top:424.1px;width:773.2px;height:3px;background:#5AA468"></div><div class="a" style="left:7.7px;top:94.0px;width:3px;height:331.6px;background:#5AA468"></div><div class="a" style="left:404.1px;top:94.0px;width:3px;height:331.6px;background:#5AA468"></div><div class="a" style="left:780.9px;top:94.0px;width:3px;height:331.6px;background:#5AA468"></div><span class="s" style="right:130.8px;transform-origin:100% 50%;top:97.1px;font-size:27.6px;line-height:36px;color:#FFFFFF;transform:scaleX(0.783);">گروه متمركز</span><span class="s" style="right:526.6px;transform-origin:100% 50%;top:97.1px;font-size:27.6px;line-height:36px;color:#FFFFFF;transform:scaleX(0.783);">تيم متمركز</span><div class="a" style="left:766.4px;top:152.0px;width:5px;height:5px;background:#55cc44"></div><span class="s" style="right:35.6px;transform-origin:100% 50%;top:141.4px;font-size:18px;line-height:23px;color:#FFFFFF;transform:scaleX(1.063);">با يكديگر همكاري مي‌كنند و مسئوليت</span><span class="s" style="right:35.6px;transform-origin:100% 50%;top:165.4px;font-size:18px;line-height:23px;color:#FFFFFF;transform:scaleX(0.978);">كار را مي‌پذيرند افراد در گروه تنها</span><div class="a" style="left:389.6px;top:152.0px;width:5px;height:5px;background:#55cc44"></div><span class="s" style="right:412.4px;transform-origin:100% 50%;top:141.4px;font-size:18px;line-height:23px;color:#FFFFFF;transform:scaleX(0.869);">به وظايف خود توجه دارند و كمتر در تصميم‌گيري</span><span class="s" style="right:412.4px;transform-origin:100% 50%;top:165.4px;font-size:18px;line-height:23px;color:#FFFFFF;transform:scaleX(1.066);">در تصميم‌گيري مشاركت مي‌كنند اعتماد</span><span class="s" style="right:412.4px;transform-origin:100% 50%;top:189.4px;font-size:18px;line-height:23px;color:#FFFFFF;transform:scaleX(1.060);">ارتباط باز</span><div class="a" style="left:766.4px;top:236.8px;width:5px;height:5px;background:#55cc44"></div><span class="s" style="right:35.6px;transform-origin:100% 50%;top:226.2px;font-size:18px;line-height:23px;color:#FFFFFF;transform:scaleX(0.954);">و افزايش بهره‌وري سازمان مي‌شود مدير</span><span class="s" style="right:35.6px;transform-origin:100% 50%;top:250.2px;font-size:18px;line-height:23px;color:#FFFFFF;transform:scaleX(1.119);">نقش هماهنگ‌كننده دارد و از</span><div class="a" style="left:389.6px;top:236.8px;width:5px;height:5px;background:#55cc44"></div><span class="s" style="right:412.4px;transform-origin:100% 50%;top:226.2px;font-size:18px;line-height:23px;color:#FFFFFF;transform:scaleX(0.979);">استفاده مي‌كند تعارض‌ها به صورت سازنده</span><span class="s" style="right:412.4px;transform-origin:100% 50%;top:250.2px;font-size:18px;line-height:23px;color:#FFFFFF;transform:scaleX(0.983);">مي‌شوند و هر فرد مهارت‌هاي</span><div class="a" style="left:766.4px;top:296.0px;width:5px;height:5px;background:#55cc44"></div><span class="s" style="right:35.6px;transform-origin:100% 50%;top:285.4px;font-size:18px;line-height:23px;color:#FFFFFF;transform:scaleX(0.973);">در اختيار ديگران قرار مي‌دهد تيم به رشد</span><span class="s" style="right:35.6px;transform-origin:100% 50%;top:309.4px;font-size:18px;line-height:23px;color:#FFFFFF;transform:scaleX(0.878);">رشد و توسعه</span><div class="a" style="left:389.6px;top:296.0px;width:5px;height:5px;background:#55cc44"></div><span class="s" style="right:412.4px;transform-origin:100% 50%;top:285.4px;font-size:18px;line-height:23px;color:#FFFFFF;transform:scaleX(0.975);">خود متعهد است اعضاي تيم براي رسيدن به</span><span class="s" style="right:412.4px;transform-origin:100% 50%;top:309.4px;font-size:18px;line-height:23px;color:#FFFFFF;transform:scaleX(1.004);">به هدف مشترك با يكديگر همكاري مي‌كنند</span><span class="s" style="right:412.4px;transform-origin:100% 50%;top:333.4px;font-size:18px;line-height:23px;color:#FFFFFF;transform:scaleX(1.026);">و مسئوليت نتايج كار</span><div class="a" style="left:766.4px;top:379.6px;width:5px;height:5px;background:#55cc44"></div><span class="s" style="right:35.6px;transform-origin:100% 50%;top:369.0px;font-size:18px;line-height:23px;color:#FFFFFF;transform:scaleX(0.985);">در گروه تنها به وظايف خود توجه دارند و</span><span class="s" style="right:35.6px;transform-origin:100% 50%;top:393.0px;font-size:18px;line-height:23px;color:#FFFFFF;transform:scaleX(1.313);">دارند و كمتر در</span><div class="a" style="left:389.6px;top:379.6px;width:5px;height:5px;background:#55cc44"></div><span class="s" style="right:412.4px;transform-origin:100% 50%;top:369.0px;font-size:18px;line-height:23px;color:#FFFFFF;transform:scaleX(0.977);">اعتماد متقابل و ارتباط باز ميان اعضا سبب</span><span class="s" style="right:412.4px;transform-origin:100% 50%;top:393.0px;font-size:18px;line-height:23px;color:#FFFFFF;transform:scaleX(1.226);">سبب</span></div></div></div>
<svg style="left:434px;top:312px" width="11" height="10" viewBox="0 0 11 10"><path d="M6.1 0.6L7.2 3.7H10.5L7.8 5.7L8.8 8.9L6.1 7L3.4 8.9L4.4 5.7L1.7 3.7H5Z" fill="#666"/><path d="M0.3 2.6L1.2 3.3M0.4 6.2L1.8 5.8" stroke="#555" stroke-width="1"/></svg>
<span class="num" style="left:533px;top:308px">9</span>
<div class="sl" style="left:668px;top:165px"><div class="bg"><svg class="sw" width="198" height="137" viewBox="0 0 198 137"><path d="M0 83 L62 104 C 95 106, 140 88, 198 48 L198 62 C 150 95, 110 112, 66 110 Z" fill="#fff" fill-opacity="0.13"/><path d="M0 83 L62 104 L60 106 Z" fill="#fff" fill-opacity="0.18"/><path d="M20 108 C 50 100, 80 112, 110 137 L 70 137 C 60 125, 40 112, 20 108 Z" fill="#fff" fill-opacity="0.05"/><path d="M0 96 C 30 100, 50 108, 62 118 C 40 112, 20 106, 0 104 Z" fill="#fff" fill-opacity="0.06"/></svg><div class="in"><span class="s" style="right:60.4px;transform-origin:100% 50%;top:22.6px;font-size:39.1px;line-height:51px;color:#CCFFFF;transform:scaleX(0.627);">تفاوت‌هاي مديريت متمركز گروهي و مديريت متمركز تيمي</span><div class="a" style="left:9.2px;top:92.5px;width:773.2px;height:3px;background:#5AA468"></div><div class="a" style="left:9.2px;top:138.1px;width:773.2px;height:3px;background:#5AA468"></div><div class="a" style="left:9.2px;top:248.1px;width:773.2px;height:3px;background:#5AA468"></div><div class="a" style="left:9.2px;top:331.3px;width:773.2px;height:3px;background:#5AA468"></div><div class="a" style="left:9.2px;top:416.1px;width:773.2px;height:3px;background:#5AA468"></div><div class="a" style="left:9.2px;top:498.1px;width:773.2px;height:3px;background:#5AA468"></div><div class="a" style="left:7.7px;top:94.0px;width:3px;height:405.6px;background:#5AA468"></div><div class="a" style="left:404.1px;top:94.0px;width:3px;height:405.6px;background:#5AA468"></div><div class="a" style="left:780.9px;top:94.0px;width:3px;height:405.6px;background:#5AA468"></div><span class="s" style="right:130.8px;transform-origin:100% 50%;top:97.1px;font-size:27.6px;line-height:36px;color:#FFFFFF;transform:scaleX(0.783);">گروه متمركز</span><span class="s" style="right:526.6px;transform-origin:100% 50%;top:97.1px;font-size:27.6px;line-height:36px;color:#FFFFFF;transform:scaleX(0.783);">تيم متمركز</span><div class="a" style="left:766.4px;top:152.0px;width:5px;height:5px;background:#55cc44"></div><span class="s" style="right:35.6px;transform-origin:100% 50%;top:141.4px;font-size:18px;line-height:23px;color:#FFFFFF;transform:scaleX(0.957);">مي‌شود مدير تيم نقش هماهنگ‌كننده دارد</span><span class="s" style="right:35.6px;transform-origin:100% 50%;top:166.4px;font-size:18px;line-height:23px;color:#FFFFFF;transform:scaleX(0.995);">از نظرات همه استفاده مي‌كند تعارض‌ها</span><span class="s" style="right:35.6px;transform-origin:100% 50%;top:191.4px;font-size:18px;line-height:23px;color:#FFFFFF;transform:scaleX(1.093);">صورت سازنده</span><div class="a" style="left:389.6px;top:152.0px;width:5px;height:5px;background:#55cc44"></div><span class="s" style="right:412.4px;transform-origin:100% 50%;top:141.4px;font-size:18px;line-height:23px;color:#FFFFFF;transform:scaleX(1.050);">مهارت‌هاي خود را در اختيار ديگران قرار</span><span class="s" style="right:412.4px;transform-origin:100% 50%;top:166.4px;font-size:18px;line-height:23px;color:#FFFFFF;transform:scaleX(1.005);">مي‌دهد تيم به رشد و توسعه مستمر خود و</span><span class="s" style="right:412.4px;transform-origin:100% 50%;top:191.4px;font-size:18px;line-height:23px;color:#FFFFFF;transform:scaleX(1.018);">خود و اعضاي خود متعهد است اعضاي تيم</span><span class="s" style="right:412.4px;transform-origin:100% 50%;top:216.4px;font-size:18px;line-height:23px;color:#FFFFFF;transform:scaleX(1.029);">تيم براي رسيدن</span><div class="a" style="left:766.4px;top:262.0px;width:5px;height:5px;background:#55cc44"></div><span class="s" style="right:35.6px;transform-origin:100% 50%;top:251.4px;font-size:18px;line-height:23px;color:#FFFFFF;transform:scaleX(0.980);">يكديگر همكاري مي‌كنند و مسئوليت نتايج</span><span class="s" style="right:35.6px;transform-origin:100% 50%;top:276.4px;font-size:18px;line-height:23px;color:#FFFFFF;transform:scaleX(1.034);">را مي‌پذيرند افراد در گروه تنها</span><div class="a" style="left:389.6px;top:262.0px;width:5px;height:5px;background:#55cc44"></div><span class="s" style="right:412.4px;transform-origin:100% 50%;top:251.4px;font-size:18px;line-height:23px;color:#FFFFFF;transform:scaleX(0.920);">وظايف خود توجه دارند و كمتر در تصميم‌گيري</span><span class="s" style="right:412.4px;transform-origin:100% 50%;top:276.4px;font-size:18px;line-height:23px;color:#FFFFFF;transform:scaleX(0.950);">تصميم‌گيري مشاركت مي‌كنند اعتماد متقابل</span><span class="s" style="right:412.4px;transform-origin:100% 50%;top:301.4px;font-size:18px;line-height:23px;color:#FFFFFF;transform:scaleX(1.074);">باز ميان اعضا سبب بهبود</span><div class="a" style="left:766.4px;top:345.2px;width:5px;height:5px;background:#55cc44"></div><span class="s" style="right:35.6px;transform-origin:100% 50%;top:334.6px;font-size:18px;line-height:23px;color:#FFFFFF;transform:scaleX(0.999);">افزايش بهره‌وري سازمان مي‌شود مدير</span><span class="s" style="right:35.6px;transform-origin:100% 50%;top:359.6px;font-size:18px;line-height:23px;color:#FFFFFF;transform:scaleX(0.910);">هماهنگ‌كننده دارد و از نظرات همه استفاده</span><span class="s" style="right:35.6px;transform-origin:100% 50%;top:384.6px;font-size:18px;line-height:23px;color:#FFFFFF;transform:scaleX(0.985);">مي‌كند تعارض‌ها به صورت</span><div class="a" style="left:389.6px;top:345.2px;width:5px;height:5px;background:#55cc44"></div><span class="s" style="right:412.4px;transform-origin:100% 50%;top:334.6px;font-size:18px;line-height:23px;color:#FFFFFF;transform:scaleX(0.946);">و هر فرد مهارت‌هاي خود را در اختيار ديگران</span><span class="s" style="right:412.4px;transform-origin:100% 50%;top:359.6px;font-size:18px;line-height:23px;color:#FFFFFF;transform:scaleX(1.055);">اختيار ديگران قرار مي‌دهد تيم به رشد و</span><span class="s" style="right:412.4px;transform-origin:100% 50%;top:384.6px;font-size:18px;line-height:23px;color:#FFFFFF;transform:scaleX(3.217);">و</span><div class="a" style="left:766.4px;top:430.0px;width:5px;height:5px;background:#55cc44"></div><span class="s" style="right:35.6px;transform-origin:100% 50%;top:419.4px;font-size:18px;line-height:23px;color:#FFFFFF;transform:scaleX(1.030);">متعهد است اعضاي تيم براي رسيدن به</span><span class="s" style="right:35.6px;transform-origin:100% 50%;top:444.4px;font-size:18px;line-height:23px;color:#FFFFFF;transform:scaleX(1.013);">هدف مشترك با يكديگر همكاري مي‌كنند</span><span class="s" style="right:35.6px;transform-origin:100% 50%;top:469.4px;font-size:18px;line-height:23px;color:#FFFFFF;transform:scaleX(0.419);">مسئوليت</span><div class="a" style="left:389.6px;top:430.0px;width:5px;height:5px;background:#55cc44"></div><span class="s" style="right:412.4px;transform-origin:100% 50%;top:419.4px;font-size:18px;line-height:23px;color:#FFFFFF;transform:scaleX(1.003);">گروه تنها به وظايف خود توجه دارند</span></div></div></div>
<svg style="left:669px;top:312px" width="11" height="10" viewBox="0 0 11 10"><path d="M6.1 0.6L7.2 3.7H10.5L7.8 5.7L8.8 8.9L6.1 7L3.4 8.9L4.4 5.7L1.7 3.7H5Z" fill="#666"/><path d="M0.3 2.6L1.2 3.3M0.4 6.2L1.8 5.8" stroke="#555" stroke-width="1"/></svg>
<span class="num" style="left:768px;top:308px">8</span>
<div class="sl" style="left:903px;top:165px"><div class="bg"><svg class="sw" width="198" height="137" viewBox="0 0 198 137"><path d="M0 83 L62 104 C 95 106, 140 88, 198 48 L198 62 C 150 95, 110 112, 66 110 Z" fill="#fff" fill-opacity="0.13"/><path d="M0 83 L62 104 L60 106 Z" fill="#fff" fill-opacity="0.18"/><path d="M20 108 C 50 100, 80 112, 110 137 L 70 137 C 60 125, 40 112, 20 108 Z" fill="#fff" fill-opacity="0.05"/><path d="M0 96 C 30 100, 50 108, 62 118 C 40 112, 20 106, 0 104 Z" fill="#fff" fill-opacity="0.06"/></svg><div class="in"><span class="s" style="right:156.0px;transform-origin:100% 50%;top:14.4px;font-size:50.6px;line-height:66px;color:#CCFFFF;transform:scaleX(0.641);">مقايسه كار گروهي با كار تيمي</span><div class="a" style="left:9.2px;top:92.5px;width:773.2px;height:3px;background:#5AA468"></div><div class="a" style="left:9.2px;top:138.1px;width:773.2px;height:3px;background:#5AA468"></div><div class="a" style="left:9.2px;top:238.5px;width:773.2px;height:3px;background:#5AA468"></div><div class="a" style="left:9.2px;top:320.5px;width:773.2px;height:3px;background:#5AA468"></div><div class="a" style="left:9.2px;top:402.5px;width:773.2px;height:3px;background:#5AA468"></div><div class="a" style="left:9.2px;top:498.1px;width:773.2px;height:3px;background:#5AA468"></div><div class="a" style="left:7.7px;top:94.0px;width:3px;height:405.6px;background:#5AA468"></div><div class="a" style="left:404.1px;top:94.0px;width:3px;height:405.6px;background:#5AA468"></div><div class="a" style="left:780.9px;top:94.0px;width:3px;height:405.6px;background:#5AA468"></div><span class="s" style="right:174.4px;transform-origin:100% 50%;top:102.1px;font-size:20.7px;line-height:27px;color:#FFFFFF;transform:scaleX(0.944);">گروه</span><span class="s" style="right:570.2px;transform-origin:100% 50%;top:102.1px;font-size:20.7px;line-height:27px;color:#FFFFFF;transform:scaleX(0.888);">تيم</span><div class="a" style="left:766.4px;top:152.0px;width:5px;height:5px;background:#55cc44"></div><span class="s" style="right:35.6px;transform-origin:100% 50%;top:141.4px;font-size:17.5px;line-height:23px;color:#FFFFFF;transform:scaleX(1.027);">و كمتر در تصميم‌گيري مشاركت مي‌كنند</span><span class="s" style="right:35.6px;transform-origin:100% 50%;top:164.2px;font-size:17.5px;line-height:23px;color:#FFFFFF;transform:scaleX(0.970);">متقابل و ارتباط باز ميان اعضا سبب بهبود</span><span class="s" style="right:35.6px;transform-origin:100% 50%;top:187.0px;font-size:17.5px;line-height:23px;color:#FFFFFF;transform:scaleX(0.975);">بهبود عملكرد و افزايش بهره‌وري سازمان</span><span class="s" style="right:35.6px;transform-origin:100% 50%;top:209.8px;font-size:17.5px;line-height:23px;color:#FFFFFF;transform:scaleX(0.863);">مدير تيم نقش هماهنگ‌كننده</span><div class="a" style="left:389.6px;top:152.0px;width:5px;height:5px;background:#55cc44"></div><span class="s" style="right:412.4px;transform-origin:100% 50%;top:141.4px;font-size:17.5px;line-height:23px;color:#FFFFFF;transform:scaleX(1.078);">نظرات همه استفاده مي‌كند تعارض‌ها به</span><span class="s" style="right:412.4px;transform-origin:100% 50%;top:164.2px;font-size:17.5px;line-height:23px;color:#FFFFFF;transform:scaleX(1.055);">سازنده حل مي‌شوند و</span><div class="a" style="left:766.4px;top:252.4px;width:5px;height:5px;background:#55cc44"></div><span class="s" style="right:35.6px;transform-origin:100% 50%;top:241.8px;font-size:17.5px;line-height:23px;color:#FFFFFF;transform:scaleX(1.019);">خود را در اختيار ديگران قرار مي‌دهد تيم</span><span class="s" style="right:35.6px;transform-origin:100% 50%;top:264.6px;font-size:17.5px;line-height:23px;color:#FFFFFF;transform:scaleX(0.983);">تيم به رشد و توسعه مستمر خود و اعضاي</span><span class="s" style="right:35.6px;transform-origin:100% 50%;top:287.4px;font-size:17.5px;line-height:23px;color:#FFFFFF;transform:scaleX(1.228);">و اعضاي خود</span><div class="a" style="left:389.6px;top:252.4px;width:5px;height:5px;background:#55cc44"></div><span class="s" style="right:412.4px;transform-origin:100% 50%;top:241.8px;font-size:17.5px;line-height:23px;color:#FFFFFF;transform:scaleX(0.925);">براي رسيدن به هدف مشترك با يكديگر همكاري</span><span class="s" style="right:412.4px;transform-origin:100% 50%;top:264.6px;font-size:17.5px;line-height:23px;color:#FFFFFF;transform:scaleX(1.088);">همكاري مي‌كنند و مسئوليت نتايج كار را</span><span class="s" style="right:412.4px;transform-origin:100% 50%;top:287.4px;font-size:17.5px;line-height:23px;color:#FFFFFF;transform:scaleX(0.848);">مي‌پذيرند افراد</span><div class="a" style="left:766.4px;top:334.4px;width:5px;height:5px;background:#55cc44"></div><span class="s" style="right:35.6px;transform-origin:100% 50%;top:323.8px;font-size:17.5px;line-height:23px;color:#FFFFFF;transform:scaleX(1.083);">خود توجه دارند و كمتر در تصميم‌گيري</span><span class="s" style="right:35.6px;transform-origin:100% 50%;top:346.6px;font-size:17.5px;line-height:23px;color:#FFFFFF;transform:scaleX(1.007);">مشاركت مي‌كنند اعتماد متقابل و ارتباط</span><span class="s" style="right:35.6px;transform-origin:100% 50%;top:369.4px;font-size:17.5px;line-height:23px;color:#FFFFFF;transform:scaleX(1.112);">ميان اعضا سبب بهبود</span><div class="a" style="left:389.6px;top:334.4px;width:5px;height:5px;background:#55cc44"></div><span class="s" style="right:412.4px;transform-origin:100% 50%;top:323.8px;font-size:17.5px;line-height:23px;color:#FFFFFF;transform:scaleX(1.053);">بهره‌وري سازمان مي‌شود مدير تيم نقش</span><span class="s" style="right:412.4px;transform-origin:100% 50%;top:346.6px;font-size:17.5px;line-height:23px;color:#FFFFFF;transform:scaleX(0.930);">دارد و از نظرات همه استفاده مي‌كند تعارض‌ها</span><span class="s" style="right:412.4px;transform-origin:100% 50%;top:369.4px;font-size:17.5px;line-height:23px;color:#FFFFFF;transform:scaleX(1.048);">تعارض‌ها به صورت سازنده</span><div class="a" style="left:766.4px;top:416.4px;width:5px;height:5px;background:#55cc44"></div><span class="s" style="right:35.6px;transform-origin:100% 50%;top:405.8px;font-size:17.5px;line-height:23px;color:#FFFFFF;transform:scaleX(0.961);">هر فرد مهارت‌هاي خود را در اختيار ديگران</span><span class="s" style="right:35.6px;transform-origin:100% 50%;top:428.6px;font-size:17.5px;line-height:23px;color:#FFFFFF;transform:scaleX(1.009);">ديگران قرار مي‌دهد تيم به رشد و توسعه</span><span class="s" style="right:35.6px;transform-origin:100% 50%;top:451.4px;font-size:17.5px;line-height:23px;color:#FFFFFF;transform:scaleX(1.006);">توسعه مستمر</span><div class="a" style="left:389.6px;top:416.4px;width:5px;height:5px;background:#55cc44"></div><span class="s" style="right:412.4px;transform-origin:100% 50%;top:405.8px;font-size:17.5px;line-height:23px;color:#FFFFFF;transform:scaleX(0.942);">است اعضاي تيم براي رسيدن به هدف مشترك</span><span class="s" style="right:412.4px;transform-origin:100% 50%;top:428.6px;font-size:17.5px;line-height:23px;color:#FFFFFF;transform:scaleX(0.950);">مشترك با يكديگر همكاري مي‌كنند و مسئوليت</span><span class="s" style="right:412.4px;transform-origin:100% 50%;top:451.4px;font-size:17.5px;line-height:23px;color:#FFFFFF;transform:scaleX(1.017);">نتايج كار را مي‌پذيرند افراد در گروه تنها به</span><span class="s" style="right:412.4px;transform-origin:100% 50%;top:474.2px;font-size:17.5px;line-height:23px;color:#FFFFFF;transform:scaleX(1.018);">تنها به وظايف خود توجه دارند و</span></div></div></div>
<svg style="left:904px;top:312px" width="11" height="10" viewBox="0 0 11 10"><path d="M6.1 0.6L7.2 3.7H10.5L7.8 5.7L8.8 8.9L6.1 7L3.4 8.9L4.4 5.7L1.7 3.7H5Z" fill="#666"/><path d="M0.3 2.6L1.2 3.3M0.4 6.2L1.8 5.8" stroke="#555" stroke-width="1"/></svg>
<span class="num" style="left:1003px;top:308px">7</span>
<div class="sl" style="left:1138px;top:165px"><div class="bg"><svg class="sw" width="198" height="137" viewBox="0 0 198 137"><path d="M0 83 L62 104 C 95 106, 140 88, 198 48 L198 62 C 150 95, 110 112, 66 110 Z" fill="#fff" fill-opacity="0.13"/><path d="M0 83 L62 104 L60 106 Z" fill="#fff" fill-opacity="0.18"/><path d="M20 108 C 50 100, 80 112, 110 137 L 70 137 C 60 125, 40 112, 20 108 Z" fill="#fff" fill-opacity="0.05"/><path d="M0 96 C 30 100, 50 108, 62 118 C 40 112, 20 106, 0 104 Z" fill="#fff" fill-opacity="0.06"/></svg><div class="in"><span class="s" style="right:156.0px;transform-origin:100% 50%;top:28.8px;font-size:50.6px;line-height:66px;color:#CCFFFF;transform:scaleX(0.641);">مقايسه كار گروهي با كار تيمي</span><div class="a" style="left:38.0px;top:104.5px;width:715.2px;height:3px;background:#5AA468"></div><div class="a" style="left:38.0px;top:148.1px;width:715.2px;height:3px;background:#5AA468"></div><div class="a" style="left:38.0px;top:249.7px;width:715.2px;height:3px;background:#5AA468"></div><div class="a" style="left:38.0px;top:330.1px;width:715.2px;height:3px;background:#5AA468"></div><div class="a" style="left:38.0px;top:409.7px;width:715.2px;height:3px;background:#5AA468"></div><div class="a" style="left:38.0px;top:514.1px;width:715.2px;height:3px;background:#5AA468"></div><div class="a" style="left:36.5px;top:106.0px;width:3px;height:409.6px;background:#5AA468"></div><div class="a" style="left:391.7px;top:106.0px;width:3px;height:409.6px;background:#5AA468"></div><div class="a" style="left:751.7px;top:106.0px;width:3px;height:409.6px;background:#5AA468"></div><span class="s" style="right:195.2px;transform-origin:100% 50%;top:113.1px;font-size:20.7px;line-height:27px;color:#FFFFFF;transform:scaleX(0.944);">گروه</span><span class="s" style="right:562.0px;transform-origin:100% 50%;top:113.1px;font-size:20.7px;line-height:27px;color:#FFFFFF;transform:scaleX(0.888);">تيم</span><div class="a" style="left:737.2px;top:162.0px;width:5px;height:5px;background:#55cc44"></div><span class="s" style="right:64.8px;transform-origin:100% 50%;top:151.4px;font-size:18px;line-height:23px;color:#FFFFFF;transform:scaleX(0.996);">كمتر در تصميم‌گيري مشاركت مي‌كنند</span><span class="s" style="right:64.8px;transform-origin:100% 50%;top:175.4px;font-size:18px;line-height:23px;color:#FFFFFF;transform:scaleX(1.097);">و ارتباط باز ميان اعضا سبب بهبود</span><span class="s" style="right:64.8px;transform-origin:100% 50%;top:199.4px;font-size:18px;line-height:23px;color:#FFFFFF;transform:scaleX(1.000);">عملكرد و افزايش بهره‌وري سازمان</span><div class="a" style="left:377.2px;top:162.0px;width:5px;height:5px;background:#55cc44"></div><span class="s" style="right:424.8px;transform-origin:100% 50%;top:151.4px;font-size:18px;line-height:23px;color:#FFFFFF;transform:scaleX(0.934);">تيم نقش هماهنگ‌كننده دارد و از نظرات</span><span class="s" style="right:424.8px;transform-origin:100% 50%;top:175.4px;font-size:18px;line-height:23px;color:#FFFFFF;transform:scaleX(0.936);">همه استفاده مي‌كند تعارض‌ها به صورت</span><span class="s" style="right:424.8px;transform-origin:100% 50%;top:199.4px;font-size:18px;line-height:23px;color:#FFFFFF;transform:scaleX(0.879);">حل مي‌شوند و هر فرد مهارت‌هاي</span><div class="a" style="left:737.2px;top:263.6px;width:5px;height:5px;background:#55cc44"></div><span class="s" style="right:64.8px;transform-origin:100% 50%;top:253.0px;font-size:18px;line-height:23px;color:#FFFFFF;transform:scaleX(0.987);">را در اختيار ديگران قرار مي‌دهد تيم به</span><span class="s" style="right:64.8px;transform-origin:100% 50%;top:277.0px;font-size:18px;line-height:23px;color:#FFFFFF;transform:scaleX(1.002);">به رشد و توسعه مستمر خود و اعضاي</span><span class="s" style="right:64.8px;transform-origin:100% 50%;top:301.0px;font-size:18px;line-height:23px;color:#FFFFFF;transform:scaleX(0.963);">اعضاي خود متعهد است</span><div class="a" style="left:377.2px;top:263.6px;width:5px;height:5px;background:#55cc44"></div><span class="s" style="right:424.8px;transform-origin:100% 50%;top:253.0px;font-size:18px;line-height:23px;color:#FFFFFF;transform:scaleX(0.898);">رسيدن به هدف مشترك با يكديگر همكاري</span><span class="s" style="right:424.8px;transform-origin:100% 50%;top:277.0px;font-size:18px;line-height:23px;color:#FFFFFF;transform:scaleX(0.902);">مي‌كنند و مسئوليت نتايج كار را مي‌پذيرند</span><span class="s" style="right:424.8px;transform-origin:100% 50%;top:301.0px;font-size:18px;line-height:23px;color:#FFFFFF;transform:scaleX(1.075);">افراد در گروه تنها به</span><div class="a" style="left:737.2px;top:344.0px;width:5px;height:5px;background:#55cc44"></div><span class="s" style="right:64.8px;transform-origin:100% 50%;top:333.4px;font-size:18px;line-height:23px;color:#FFFFFF;transform:scaleX(1.136);">توجه دارند و كمتر در تصميم‌گيري</span><span class="s" style="right:64.8px;transform-origin:100% 50%;top:357.4px;font-size:18px;line-height:23px;color:#FFFFFF;transform:scaleX(0.948);">مي‌كنند اعتماد متقابل و ارتباط باز ميان</span><span class="s" style="right:64.8px;transform-origin:100% 50%;top:381.4px;font-size:18px;line-height:23px;color:#FFFFFF;transform:scaleX(0.918);">اعضا سبب بهبود عملكرد و افزايش</span><div class="a" style="left:377.2px;top:344.0px;width:5px;height:5px;background:#55cc44"></div><span class="s" style="right:424.8px;transform-origin:100% 50%;top:333.4px;font-size:18px;line-height:23px;color:#FFFFFF;transform:scaleX(1.189);">سازمان مي‌شود مدير تيم نقش</span><span class="s" style="right:424.8px;transform-origin:100% 50%;top:357.4px;font-size:18px;line-height:23px;color:#FFFFFF;transform:scaleX(0.890);">و از نظرات همه استفاده مي‌كند تعارض‌ها</span><span class="s" style="right:424.8px;transform-origin:100% 50%;top:381.4px;font-size:18px;line-height:23px;color:#FFFFFF;transform:scaleX(1.055);">به صورت سازنده حل</span><div class="a" style="left:737.2px;top:423.6px;width:5px;height:5px;background:#55cc44"></div><span class="s" style="right:64.8px;transform-origin:100% 50%;top:413.0px;font-size:18px;line-height:23px;color:#FFFFFF;transform:scaleX(0.964);">فرد مهارت‌هاي خود را در اختيار ديگران</span><span class="s" style="right:64.8px;transform-origin:100% 50%;top:437.0px;font-size:18px;line-height:23px;color:#FFFFFF;transform:scaleX(0.930);">قرار مي‌دهد تيم به رشد و توسعه مستمر</span><span class="s" style="right:64.8px;transform-origin:100% 50%;top:461.0px;font-size:18px;line-height:23px;color:#FFFFFF;transform:scaleX(1.006);">مستمر خود و اعضاي خود متعهد</span><div class="a" style="left:377.2px;top:423.6px;width:5px;height:5px;background:#55cc44"></div><span class="s" style="right:424.8px;transform-origin:100% 50%;top:413.0px;font-size:18px;line-height:23px;color:#FFFFFF;transform:scaleX(0.924);">اعضاي تيم براي رسيدن به هدف مشترك</span><span class="s" style="right:424.8px;transform-origin:100% 50%;top:437.0px;font-size:18px;line-height:23px;color:#FFFFFF;transform:scaleX(0.996);">با يكديگر همكاري مي‌كنند و مسئوليت</span><span class="s" style="right:424.8px;transform-origin:100% 50%;top:461.0px;font-size:18px;line-height:23px;color:#FFFFFF;transform:scaleX(1.001);">كار را مي‌پذيرند افراد در گروه تنها به</span><span class="s" style="right:424.8px;transform-origin:100% 50%;top:485.0px;font-size:18px;line-height:23px;color:#FFFFFF;transform:scaleX(2.707);">به</span></div></div></div>
<svg style="left:1139px;top:312px" width="11" height="10" viewBox="0 0 11 10"><path d="M6.1 0.6L7.2 3.7H10.5L7.8 5.7L8.8 8.9L6.1 7L3.4 8.9L4.4 5.7L1.7 3.7H5Z" fill="#666"/><path d="M0.3 2.6L1.2 3.3M0.4 6.2L1.8 5.8" stroke="#555" stroke-width="1"/></svg>
<span class="num" style="left:1238px;top:308px">6</span>
<div class="sl" style="left:198px;top:355px"><div class="bg"><svg class="sw" width="198" height="137" viewBox="0 0 198 137"><path d="M0 83 L62 104 C 95 106, 140 88, 198 48 L198 62 C 150 95, 110 112, 66 110 Z" fill="#fff" fill-opacity="0.13"/><path d="M0 83 L62 104 L60 106 Z" fill="#fff" fill-opacity="0.18"/><path d="M20 108 C 50 100, 80 112, 110 137 L 70 137 C 60 125, 40 112, 20 108 Z" fill="#fff" fill-opacity="0.05"/><path d="M0 96 C 30 100, 50 108, 62 118 C 40 112, 20 106, 0 104 Z" fill="#fff" fill-opacity="0.06"/></svg><div class="in"><span class="s" style="right:169.2px;transform-origin:100% 50%;top:14.4px;font-size:50.6px;line-height:66px;color:#CCFFFF;transform:scaleX(0.645);">شاخص‌هاي اساسي در يك تيم</span><span class="s" style="right:24.0px;transform-origin:100% 50%;top:94.0px;font-size:23px;line-height:30px;color:#FFFFFF;transform:scaleX(0.761);">1. هدف‌ها و ارزش‌ها</span><span class="s" style="right:64.0px;transform-origin:100% 50%;top:129.3px;font-size:15.9px;line-height:21px;color:#FFFFFF;transform:scaleX(0.957);">در تصميم‌گيري مشاركت مي‌كنند اعتماد متقابل و ارتباط باز ميان اعضا سبب بهبود عملكرد</span><div class="a" style="left:750.2px;top:140.8px;width:6px;height:3px;background:#fff"></div><span class="s" style="right:64.0px;transform-origin:100% 50%;top:158.5px;font-size:15.9px;line-height:21px;color:#FFFFFF;transform:scaleX(0.979);">ارتباط باز ميان اعضا سبب بهبود عملكرد و افزايش بهره‌وري سازمان مي‌شود مدير تيم</span><div class="a" style="left:750.2px;top:170.0px;width:6px;height:3px;background:#fff"></div><span class="s" style="right:64.0px;transform-origin:100% 50%;top:188.9px;font-size:15.9px;line-height:21px;color:#FFFFFF;transform:scaleX(0.906);">و افزايش بهره‌وري سازمان مي‌شود مدير تيم نقش هماهنگ‌كننده</span><div class="a" style="left:750.2px;top:200.4px;width:6px;height:3px;background:#fff"></div><span class="s" style="right:64.0px;transform-origin:100% 50%;top:217.7px;font-size:15.9px;line-height:21px;color:#FFFFFF;transform:scaleX(0.965);">نقش هماهنگ‌كننده دارد و از نظرات همه استفاده مي‌كند تعارض‌ها</span><div class="a" style="left:750.2px;top:229.2px;width:6px;height:3px;background:#fff"></div><span class="s" style="right:64.0px;transform-origin:100% 50%;top:245.3px;font-size:15.9px;line-height:21px;color:#FFFFFF;transform:scaleX(0.983);">استفاده مي‌كند تعارض‌ها به صورت سازنده حل مي‌شوند و هر فرد مهارت‌هاي</span><div class="a" style="left:750.2px;top:256.8px;width:6px;height:3px;background:#fff"></div><span class="s" style="right:24.0px;transform-origin:100% 50%;top:270.8px;font-size:23px;line-height:30px;color:#FFFFFF;transform:scaleX(0.734);">2. توانمندسازي</span><span class="s" style="right:64.0px;transform-origin:100% 50%;top:308.5px;font-size:15.9px;line-height:21px;color:#FFFFFF;transform:scaleX(1.041);">مي‌شوند و هر فرد مهارت‌هاي خود را در اختيار ديگران</span><div class="a" style="left:750.2px;top:320.0px;width:6px;height:3px;background:#fff"></div><span class="s" style="right:64.0px;transform-origin:100% 50%;top:336.5px;font-size:15.9px;line-height:21px;color:#FFFFFF;transform:scaleX(1.032);">در اختيار ديگران قرار مي‌دهد تيم به رشد و توسعه مستمر</span><div class="a" style="left:750.2px;top:348.0px;width:6px;height:3px;background:#fff"></div><span class="s" style="right:64.0px;transform-origin:100% 50%;top:364.1px;font-size:15.9px;line-height:21px;color:#FFFFFF;transform:scaleX(0.987);">رشد و توسعه مستمر خود و اعضاي خود متعهد است اعضاي تيم</span><div class="a" style="left:750.2px;top:375.6px;width:6px;height:3px;background:#fff"></div><span class="s" style="right:64.0px;transform-origin:100% 50%;top:392.5px;font-size:15.9px;line-height:21px;color:#FFFFFF;transform:scaleX(0.955);">خود متعهد است اعضاي تيم براي رسيدن به هدف مشترك با يكديگر</span><div class="a" style="left:750.2px;top:404.0px;width:6px;height:3px;background:#fff"></div><span class="s" style="right:64.0px;transform-origin:100% 50%;top:420.5px;font-size:15.9px;line-height:21px;color:#FFFFFF;transform:scaleX(0.952);">به هدف مشترك با يكديگر همكاري مي‌كنند و مسئوليت</span><div class="a" style="left:750.2px;top:432.0px;width:6px;height:3px;background:#fff"></div></div></div></div>
<svg style="left:199px;top:502px" width="11" height="10" viewBox="0 0 11 10"><path d="M6.1 0.6L7.2 3.7H10.5L7.8 5.7L8.8 8.9L6.1 7L3.4 8.9L4.4 5.7L1.7 3.7H5Z" fill="#666"/><path d="M0.3 2.6L1.2 3.3M0.4 6.2L1.8 5.8" stroke="#555" stroke-width="1"/></svg>
<span class="num" style="left:298px;top:498px">15</span>
<div class="sl" style="left:433px;top:355px"><div class="bg"><svg class="sw" width="198" height="137" viewBox="0 0 198 137"><path d="M0 83 L62 104 C 95 106, 140 88, 198 48 L198 62 C 150 95, 110 112, 66 110 Z" fill="#fff" fill-opacity="0.13"/><path d="M0 83 L62 104 L60 106 Z" fill="#fff" fill-opacity="0.18"/><path d="M20 108 C 50 100, 80 112, 110 137 L 70 137 C 60 125, 40 112, 20 108 Z" fill="#fff" fill-opacity="0.05"/><path d="M0 96 C 30 100, 50 108, 62 118 C 40 112, 20 106, 0 104 Z" fill="#fff" fill-opacity="0.06"/></svg><div class="in"><span class="s" style="right:260.0px;transform-origin:100% 50%;top:23.4px;font-size:34.5px;line-height:45px;color:#CCFFFF;transform:scaleX(0.920);">شناخت اهداف تيم</span><span class="s" style="right:53.2px;transform-origin:100% 50%;top:131.1px;font-size:32.2px;line-height:42px;color:#FFFFFF;transform:scaleX(0.834);">مي‌توان گفت كه تعيين اهداف مهم‌ترين كاري است كه</span><span class="s" style="right:53.2px;transform-origin:100% 50%;top:178.3px;font-size:32.2px;line-height:42px;color:#FFFFFF;transform:scaleX(0.838);">بايد پس از تشكيل تيم انجام شود</span><span class="s" style="right:252.4px;transform-origin:100% 50%;top:255.4px;font-size:34.5px;line-height:45px;color:#CCFFFF;transform:scaleX(0.966);">انتخاب اعضاي تيم</span><span class="s" style="right:49.6px;transform-origin:100% 50%;top:364.3px;font-size:32.2px;line-height:42px;color:#FFFFFF;transform:scaleX(0.866);">يكـي از مهـم‌تـرين عوامـل موفقيـت تـيم‌هـا انتخـاب</span><span class="s" style="right:49.6px;transform-origin:100% 50%;top:409.9px;font-size:32.2px;line-height:42px;color:#FFFFFF;transform:scaleX(0.853);">اعضـاي مناسـب و مطابقـت دادن دقيـق مهـارت‌هـاي</span><span class="s" style="right:49.6px;transform-origin:100% 50%;top:455.1px;font-size:32.2px;line-height:42px;color:#FFFFFF;transform:scaleX(0.843);">آن‌ها با نوع وظايفشان است.</span></div></div></div>
<svg style="left:434px;top:502px" width="11" height="10" viewBox="0 0 11 10"><path d="M6.1 0.6L7.2 3.7H10.5L7.8 5.7L8.8 8.9L6.1 7L3.4 8.9L4.4 5.7L1.7 3.7H5Z" fill="#666"/><path d="M0.3 2.6L1.2 3.3M0.4 6.2L1.8 5.8" stroke="#555" stroke-width="1"/></svg>
<span class="num" style="left:533px;top:498px">14</span>
<div class="sl" style="left:668px;top:355px"><div class="bg"><svg class="sw" width="198" height="137" viewBox="0 0 198 137"><path d="M0 83 L62 104 C 95 106, 140 88, 198 48 L198 62 C 150 95, 110 112, 66 110 Z" fill="#fff" fill-opacity="0.13"/><path d="M0 83 L62 104 L60 106 Z" fill="#fff" fill-opacity="0.18"/><path d="M20 108 C 50 100, 80 112, 110 137 L 70 137 C 60 125, 40 112, 20 108 Z" fill="#fff" fill-opacity="0.05"/><path d="M0 96 C 30 100, 50 108, 62 118 C 40 112, 20 106, 0 104 Z" fill="#fff" fill-opacity="0.06"/></svg><div class="in"><span class="s" style="right:303.2px;transform-origin:100% 50%;top:3.5px;font-size:32.2px;line-height:42px;color:#CCFFFF;transform:scaleX(0.923);">توانايي تيم‌ها</span><span class="s" style="right:236.4px;transform-origin:100% 50%;top:51.5px;font-size:32.2px;line-height:42px;color:#CCFFFF;transform:scaleX(0.911);">(هم‌افزايي توانمندي‌ها)</span><span class="s" style="right:53.2px;transform-origin:100% 50%;top:129.4px;font-size:34.5px;line-height:45px;color:#FFFFFF;transform:scaleX(0.844);">توانايي يك تيم كاري خوب محدوديت ندارد. توانايي</span><span class="s" style="right:53.2px;transform-origin:100% 50%;top:177.8px;font-size:34.5px;line-height:45px;color:#FFFFFF;transform:scaleX(0.854);">جمعي افراد براي نوآوري بسيار قوي‌تر از توانايي</span><span class="s" style="right:53.2px;transform-origin:100% 50%;top:225.0px;font-size:34.5px;line-height:45px;color:#FFFFFF;transform:scaleX(0.829);">فردي هر يك از آن‌ها است، چرا كه توان فكري آن‌ها</span><span class="s" style="right:53.2px;transform-origin:100% 50%;top:274.2px;font-size:34.5px;line-height:45px;color:#FFFFFF;transform:scaleX(0.823);">با يكديگر تركيب مي‌شود و در نتيجه قدرت فكر آن‌ها</span><span class="s" style="right:53.2px;transform-origin:100% 50%;top:323.0px;font-size:34.5px;line-height:45px;color:#FFFFFF;transform:scaleX(0.854);">بالاتر مي‌رود. تيم مي‌تواند با مهار صحيح اين توان</span><span class="s" style="right:53.2px;transform-origin:100% 50%;top:368.6px;font-size:34.5px;line-height:45px;color:#FFFFFF;transform:scaleX(0.853);">فكري پا را از مرحله يافتن راه‌حل‌هاي ساده فراتر</span><span class="s" style="right:53.2px;transform-origin:100% 50%;top:415.0px;font-size:34.5px;line-height:45px;color:#FFFFFF;transform:scaleX(0.793);">بگذارد و به موفقيت‌هاي چشمگيرتري دست يابد.</span></div></div></div>
<svg style="left:669px;top:502px" width="11" height="10" viewBox="0 0 11 10"><path d="M6.1 0.6L7.2 3.7H10.5L7.8 5.7L8.8 8.9L6.1 7L3.4 8.9L4.4 5.7L1.7 3.7H5Z" fill="#666"/><path d="M0.3 2.6L1.2 3.3M0.4 6.2L1.8 5.8" stroke="#555" stroke-width="1"/></svg>
<span class="num" style="left:768px;top:498px">13</span>
<div class="sl" style="left:903px;top:355px"><div class="bg"><svg class="sw" width="198" height="137" viewBox="0 0 198 137"><path d="M0 83 L62 104 C 95 106, 140 88, 198 48 L198 62 C 150 95, 110 112, 66 110 Z" fill="#fff" fill-opacity="0.13"/><path d="M0 83 L62 104 L60 106 Z" fill="#fff" fill-opacity="0.18"/><path d="M20 108 C 50 100, 80 112, 110 137 L 70 137 C 60 125, 40 112, 20 108 Z" fill="#fff" fill-opacity="0.05"/><path d="M0 96 C 30 100, 50 108, 62 118 C 40 112, 20 106, 0 104 Z" fill="#fff" fill-opacity="0.06"/></svg><div class="in"><span class="s" style="right:82.4px;transform-origin:100% 50%;top:20.9px;font-size:41.4px;line-height:54px;color:#CCFFFF;transform:scaleX(0.734);">مزيت حل مشكلات و مسائل به صورت تيمي</span><span class="s" style="right:53.2px;transform-origin:100% 50%;top:93.5px;font-size:24.1px;line-height:31px;color:#FFFFFF;transform:scaleX(0.848);">حل مسائل به صورت تيمي، بهترين روش برخورد با مسائل در سه حالت</span><span class="s" style="right:53.2px;transform-origin:100% 50%;top:123.9px;font-size:24.1px;line-height:31px;color:#FFFFFF;transform:scaleX(0.835);">اصلي زير است:</span><span class="s" style="right:72.0px;transform-origin:100% 50%;top:165.5px;font-size:19.5px;line-height:25px;color:#FFFFFF;transform:scaleX(1.106);">1.</span><span class="s" style="right:96.8px;transform-origin:100% 50%;top:166.6px;font-size:18px;line-height:23px;color:#FFFFFF;transform:scaleX(0.968);">و مسئوليت نتايج كار را مي‌پذيرند افراد در گروه تنها به وظايف خود توجه دارند</span><span class="s" style="right:96.8px;transform-origin:100% 50%;top:195.8px;font-size:18px;line-height:23px;color:#FFFFFF;transform:scaleX(0.957);">در گروه تنها به وظايف خود توجه دارند و كمتر در تصميم‌گيري مشاركت مي‌كنند</span><span class="s" style="right:96.8px;transform-origin:100% 50%;top:226.2px;font-size:18px;line-height:23px;color:#FFFFFF;transform:scaleX(0.972);">دارند و كمتر در تصميم‌گيري مشاركت مي‌كنند اعتماد متقابل و ارتباط باز ميان</span><span class="s" style="right:96.8px;transform-origin:100% 50%;top:256.6px;font-size:18px;line-height:23px;color:#FFFFFF;transform:scaleX(1.064);">اعتماد متقابل و</span><span class="s" style="right:72.0px;transform-origin:100% 50%;top:285.1px;font-size:19.5px;line-height:25px;color:#FFFFFF;transform:scaleX(1.106);">2.</span><span class="s" style="right:96.8px;transform-origin:100% 50%;top:286.2px;font-size:18px;line-height:23px;color:#FFFFFF;transform:scaleX(1.063);">سبب بهبود عملكرد و افزايش بهره‌وري سازمان مي‌شود مدير تيم نقش</span><span class="s" style="right:96.8px;transform-origin:100% 50%;top:315.4px;font-size:18px;line-height:23px;color:#FFFFFF;transform:scaleX(1.020);">مي‌شود مدير تيم نقش هماهنگ‌كننده</span><span class="s" style="right:72.0px;transform-origin:100% 50%;top:348.3px;font-size:19.5px;line-height:25px;color:#FFFFFF;transform:scaleX(1.106);">3.</span><span class="s" style="right:96.8px;transform-origin:100% 50%;top:349.4px;font-size:18px;line-height:23px;color:#FFFFFF;transform:scaleX(0.989);">از نظرات همه استفاده مي‌كند تعارض‌ها به صورت سازنده حل مي‌شوند و هر</span><span class="s" style="right:96.8px;transform-origin:100% 50%;top:378.2px;font-size:18px;line-height:23px;color:#FFFFFF;transform:scaleX(1.035);">صورت سازنده حل مي‌شوند و هر فرد مهارت‌هاي خود را در اختيار ديگران</span><span class="s" style="right:96.8px;transform-origin:100% 50%;top:409.4px;font-size:18px;line-height:23px;color:#FFFFFF;transform:scaleX(0.992);">مهارت‌هاي خود را در اختيار ديگران قرار مي‌دهد تيم به رشد و توسعه مستمر</span><span class="s" style="right:96.8px;transform-origin:100% 50%;top:438.6px;font-size:18px;line-height:23px;color:#FFFFFF;transform:scaleX(0.976);">مي‌دهد تيم به رشد و توسعه مستمر خود و اعضاي خود متعهد است اعضاي تيم</span><span class="s" style="right:96.8px;transform-origin:100% 50%;top:467.4px;font-size:18px;line-height:23px;color:#FFFFFF;transform:scaleX(1.025);">خود و اعضاي خود متعهد است اعضاي تيم براي رسيدن به هدف</span></div></div></div>
<svg style="left:904px;top:502px" width="11" height="10" viewBox="0 0 11 10"><path d="M6.1 0.6L7.2 3.7H10.5L7.8 5.7L8.8 8.9L6.1 7L3.4 8.9L4.4 5.7L1.7 3.7H5Z" fill="#666"/><path d="M0.3 2.6L1.2 3.3M0.4 6.2L1.8 5.8" stroke="#555" stroke-width="1"/></svg>
<span class="num" style="left:1003px;top:498px">12</span>
<div class="sl" style="left:1138px;top:355px"><div class="bg"><svg class="sw" width="198" height="137" viewBox="0 0 198 137"><path d="M0 83 L62 104 C 95 106, 140 88, 198 48 L198 62 C 150 95, 110 112, 66 110 Z" fill="#fff" fill-opacity="0.13"/><path d="M0 83 L62 104 L60 106 Z" fill="#fff" fill-opacity="0.18"/><path d="M20 108 C 50 100, 80 112, 110 137 L 70 137 C 60 125, 40 112, 20 108 Z" fill="#fff" fill-opacity="0.05"/><path d="M0 96 C 30 100, 50 108, 62 118 C 40 112, 20 106, 0 104 Z" fill="#fff" fill-opacity="0.06"/></svg><div class="in"><span class="s" style="right:321.2px;transform-origin:100% 50%;top:21.8px;font-size:36.8px;line-height:48px;color:#CCFFFF;transform:scaleX(0.845);">اهميت تيم</span><span class="s" style="right:53.2px;transform-origin:100% 50%;top:90.7px;font-size:29.9px;line-height:39px;color:#FFFFFF;transform:scaleX(0.805);">تيم‌ها حداقل به دو دليل حائز اهميت هستند:</span><span class="s" style="right:53.2px;transform-origin:100% 50%;top:147.1px;font-size:29.9px;line-height:39px;color:#FFFFFF;transform:scaleX(0.869);">اول اين كه نتيجه كاري كه با تعداد مشخصي از افراد و به</span><span class="s" style="right:53.2px;transform-origin:100% 50%;top:186.3px;font-size:29.9px;line-height:39px;color:#FFFFFF;transform:scaleX(0.868);">صورت برنامه‌ريزي شده در قالب تيمي انجام مي‌شود، از</span><span class="s" style="right:53.2px;transform-origin:100% 50%;top:228.3px;font-size:29.9px;line-height:39px;color:#FFFFFF;transform:scaleX(0.926);">كاري كه با همين تعداد افراد به صورت انفرادي انجام</span><span class="s" style="right:53.2px;transform-origin:100% 50%;top:271.9px;font-size:29.9px;line-height:39px;color:#FFFFFF;transform:scaleX(0.850);">مي‌شود بهتر خواهد بود.</span><span class="s" style="right:53.2px;transform-origin:100% 50%;top:326.3px;font-size:29.9px;line-height:39px;color:#FFFFFF;transform:scaleX(0.914);">دوم اين كه كار تيمي وسيله موثري براي ايجاد رضايت</span><span class="s" style="right:53.2px;transform-origin:100% 50%;top:365.9px;font-size:29.9px;line-height:39px;color:#FFFFFF;transform:scaleX(0.823);">خاطر كاركنان جهت رفع نيازهاي داخلي و ارتباطات است.</span></div></div></div>
<svg style="left:1139px;top:502px" width="11" height="10" viewBox="0 0 11 10"><path d="M6.1 0.6L7.2 3.7H10.5L7.8 5.7L8.8 8.9L6.1 7L3.4 8.9L4.4 5.7L1.7 3.7H5Z" fill="#666"/><path d="M0.3 2.6L1.2 3.3M0.4 6.2L1.8 5.8" stroke="#555" stroke-width="1"/></svg>
<span class="num" style="left:1238px;top:498px">11</span>
<div class="sl" style="left:198px;top:545px"><div class="bg"><svg class="sw" width="198" height="137" viewBox="0 0 198 137"><path d="M0 83 L62 104 C 95 106, 140 88, 198 48 L198 62 C 150 95, 110 112, 66 110 Z" fill="#fff" fill-opacity="0.13"/><path d="M0 83 L62 104 L60 106 Z" fill="#fff" fill-opacity="0.18"/><path d="M20 108 C 50 100, 80 112, 110 137 L 70 137 C 60 125, 40 112, 20 108 Z" fill="#fff" fill-opacity="0.05"/><path d="M0 96 C 30 100, 50 108, 62 118 C 40 112, 20 106, 0 104 Z" fill="#fff" fill-opacity="0.06"/></svg><div class="in"><span class="s" style="left:30.0px;top:30.0px;width:40px;margin-left:-20px;text-align:center;font-size:30px;line-height:36px;color:#E6FFFF">1</span><span class="s" style="left:78.0px;top:30.0px;width:40px;margin-left:-20px;text-align:center;font-size:30px;line-height:36px;color:#E6FFFF">2</span><span class="s" style="left:126.4px;top:30.0px;width:40px;margin-left:-20px;text-align:center;font-size:30px;line-height:36px;color:#E6FFFF">3</span><span class="s" style="left:173.6px;top:30.0px;width:40px;margin-left:-20px;text-align:center;font-size:30px;line-height:36px;color:#E6FFFF">4</span><span class="s" style="left:221.2px;top:30.0px;width:40px;margin-left:-20px;text-align:center;font-size:30px;line-height:36px;color:#E6FFFF">5</span><span class="s" style="left:269.2px;top:30.0px;width:40px;margin-left:-20px;text-align:center;font-size:30px;line-height:36px;color:#E6FFFF">6</span><span class="s" style="left:316.4px;top:30.0px;width:40px;margin-left:-20px;text-align:center;font-size:30px;line-height:36px;color:#E6FFFF">7</span><div class="a" style="left:11.5px;top:106.2px;width:37px;height:26px;border:6px solid #FFFF00;box-sizing:border-box;border-radius:3px"></div><div class="a" style="left:59.5px;top:106.2px;width:37px;height:26px;border:6px solid #FFFF00;box-sizing:border-box;border-radius:3px"></div><div class="a" style="left:107.9px;top:106.2px;width:37px;height:26px;border:6px solid #FFFF00;box-sizing:border-box;border-radius:3px"></div><div class="a" style="left:155.1px;top:106.2px;width:37px;height:26px;border:6px solid #FFFF00;box-sizing:border-box;border-radius:3px"></div><div class="a" style="left:202.7px;top:106.2px;width:37px;height:26px;border:6px solid #FFFF00;box-sizing:border-box;border-radius:3px"></div><div class="a" style="left:250.7px;top:106.2px;width:37px;height:26px;border:6px solid #FFFF00;box-sizing:border-box;border-radius:3px"></div><div class="a" style="left:297.9px;top:106.2px;width:37px;height:26px;border:6px solid #FFFF00;box-sizing:border-box;border-radius:3px"></div><div class="a" style="left:11.5px;top:191.0px;width:37px;height:26px;border:6px solid #FFFF00;box-sizing:border-box;border-radius:3px"></div><div class="a" style="left:59.5px;top:191.0px;width:37px;height:26px;border:6px solid #FFFF00;box-sizing:border-box;border-radius:3px"></div><div class="a" style="left:107.9px;top:191.0px;width:37px;height:26px;border:6px solid #FFFF00;box-sizing:border-box;border-radius:3px"></div><div class="a" style="left:155.1px;top:191.0px;width:37px;height:26px;border:6px solid #FFFF00;box-sizing:border-box;border-radius:3px"></div><div class="a" style="left:202.7px;top:191.0px;width:37px;height:26px;border:6px solid #FFFF00;box-sizing:border-box;border-radius:3px"></div><div class="a" style="left:250.7px;top:191.0px;width:37px;height:26px;border:6px solid #FFFF00;box-sizing:border-box;border-radius:3px"></div><div class="a" style="left:297.9px;top:191.0px;width:37px;height:26px;border:6px solid #FFFF00;box-sizing:border-box;border-radius:3px"></div><div class="a" style="left:11.5px;top:274.2px;width:37px;height:26px;border:6px solid #FFFF00;box-sizing:border-box;border-radius:3px"></div><div class="a" style="left:59.5px;top:274.2px;width:37px;height:26px;border:6px solid #FFFF00;box-sizing:border-box;border-radius:3px"></div><div class="a" style="left:107.9px;top:274.2px;width:37px;height:26px;border:6px solid #FFFF00;box-sizing:border-box;border-radius:3px"></div><div class="a" style="left:155.1px;top:274.2px;width:37px;height:26px;border:6px solid #FFFF00;box-sizing:border-box;border-radius:3px"></div><div class="a" style="left:202.7px;top:274.2px;width:37px;height:26px;border:6px solid #FFFF00;box-sizing:border-box;border-radius:3px"></div><div class="a" style="left:250.7px;top:274.2px;width:37px;height:26px;border:6px solid #FFFF00;box-sizing:border-box;border-radius:3px"></div><div class="a" style="left:297.9px;top:274.2px;width:37px;height:26px;border:6px solid #FFFF00;box-sizing:border-box;border-radius:3px"></div><div class="a" style="left:11.5px;top:358.2px;width:37px;height:26px;border:6px solid #FFFF00;box-sizing:border-box;border-radius:3px"></div><div class="a" style="left:59.5px;top:358.2px;width:37px;height:26px;border:6px solid #FFFF00;box-sizing:border-box;border-radius:3px"></div><div class="a" style="left:107.9px;top:358.2px;width:37px;height:26px;border:6px solid #FFFF00;box-sizing:border-box;border-radius:3px"></div><div class="a" style="left:155.1px;top:358.2px;width:37px;height:26px;border:6px solid #FFFF00;box-sizing:border-box;border-radius:3px"></div><div class="a" style="left:202.7px;top:358.2px;width:37px;height:26px;border:6px solid #FFFF00;box-sizing:border-box;border-radius:3px"></div><div class="a" style="left:250.7px;top:358.2px;width:37px;height:26px;border:6px solid #FFFF00;box-sizing:border-box;border-radius:3px"></div><div class="a" style="left:297.9px;top:358.2px;width:37px;height:26px;border:6px solid #FFFF00;box-sizing:border-box;border-radius:3px"></div><div class="a" style="left:11.5px;top:441.8px;width:37px;height:26px;border:6px solid #FFFF00;box-sizing:border-box;border-radius:3px"></div><div class="a" style="left:59.5px;top:441.8px;width:37px;height:26px;border:6px solid #FFFF00;box-sizing:border-box;border-radius:3px"></div><div class="a" style="left:107.9px;top:441.8px;width:37px;height:26px;border:6px solid #FFFF00;box-sizing:border-box;border-radius:3px"></div><div class="a" style="left:155.1px;top:441.8px;width:37px;height:26px;border:6px solid #FFFF00;box-sizing:border-box;border-radius:3px"></div><div class="a" style="left:202.7px;top:441.8px;width:37px;height:26px;border:6px solid #FFFF00;box-sizing:border-box;border-radius:3px"></div><div class="a" style="left:250.7px;top:441.8px;width:37px;height:26px;border:6px solid #FFFF00;box-sizing:border-box;border-radius:3px"></div><div class="a" style="left:297.9px;top:441.8px;width:37px;height:26px;border:6px solid #FFFF00;box-sizing:border-box;border-radius:3px"></div><div class="a" style="left:340.1px;top:24.8px;width:3px;height:472.8px;background:#5AA468"></div><span class="s" style="right:24.0px;transform-origin:100% 50%;top:78.5px;font-size:18.4px;line-height:24px;color:#FFFFFF;transform:scaleX(1.172);">1.</span><span class="s" style="right:46.0px;transform-origin:100% 50%;top:79.6px;font-size:17px;line-height:22px;color:#FFFFFF;transform:scaleX(0.972);">تيم براي رسيدن به هدف مشترك با يكديگر همكاري</span><span class="s" style="right:40.0px;transform-origin:100% 50%;top:105.6px;font-size:17px;line-height:22px;color:#FFFFFF;transform:scaleX(1.066);">يكديگر همكاري مي‌كنند و مسئوليت نتايج كار را</span><span class="s" style="right:40.0px;transform-origin:100% 50%;top:128.8px;font-size:17px;line-height:22px;color:#FFFFFF;transform:scaleX(2.560);">را</span><span class="s" style="right:24.0px;transform-origin:100% 50%;top:161.7px;font-size:18.4px;line-height:24px;color:#FFFFFF;transform:scaleX(1.172);">2.</span><span class="s" style="right:46.0px;transform-origin:100% 50%;top:162.8px;font-size:17px;line-height:22px;color:#FFFFFF;transform:scaleX(1.076);">وظايف خود توجه دارند و كمتر در تصميم‌گيري</span><span class="s" style="right:40.0px;transform-origin:100% 50%;top:189.2px;font-size:17px;line-height:22px;color:#FFFFFF;transform:scaleX(0.937);">تصميم‌گيري مشاركت مي‌كنند اعتماد متقابل و ارتباط</span><span class="s" style="right:40.0px;transform-origin:100% 50%;top:214.4px;font-size:17px;line-height:22px;color:#FFFFFF;transform:scaleX(0.853);">باز ميان</span><span class="s" style="right:24.0px;transform-origin:100% 50%;top:247.3px;font-size:18.4px;line-height:24px;color:#FFFFFF;transform:scaleX(1.172);">3.</span><span class="s" style="right:46.0px;transform-origin:100% 50%;top:248.4px;font-size:17px;line-height:22px;color:#FFFFFF;transform:scaleX(0.993);">افزايش بهره‌وري سازمان مي‌شود مدير تيم نقش</span><span class="s" style="right:40.0px;transform-origin:100% 50%;top:274.0px;font-size:17px;line-height:22px;color:#FFFFFF;transform:scaleX(0.980);">هماهنگ‌كننده دارد و از نظرات همه استفاده مي‌كند</span><span class="s" style="right:40.0px;transform-origin:100% 50%;top:297.6px;font-size:17px;line-height:22px;color:#FFFFFF;transform:scaleX(0.589);">مي‌كند</span><span class="s" style="right:24.0px;transform-origin:100% 50%;top:332.1px;font-size:18.4px;line-height:24px;color:#FFFFFF;transform:scaleX(1.172);">4.</span><span class="s" style="right:46.0px;transform-origin:100% 50%;top:333.2px;font-size:17px;line-height:22px;color:#FFFFFF;transform:scaleX(0.992);">و هر فرد مهارت‌هاي خود را در اختيار ديگران قرار</span><span class="s" style="right:40.0px;transform-origin:100% 50%;top:358.8px;font-size:17px;line-height:22px;color:#FFFFFF;transform:scaleX(1.061);">اختيار ديگران قرار مي‌دهد تيم به رشد و توسعه</span><span class="s" style="right:40.0px;transform-origin:100% 50%;top:381.2px;font-size:17px;line-height:22px;color:#FFFFFF;transform:scaleX(0.920);">و توسعه مستمر</span><span class="s" style="right:24.0px;transform-origin:100% 50%;top:416.1px;font-size:18.4px;line-height:24px;color:#FFFFFF;transform:scaleX(1.172);">5.</span><span class="s" style="right:46.0px;transform-origin:100% 50%;top:417.2px;font-size:17px;line-height:22px;color:#FFFFFF;transform:scaleX(0.939);">متعهد است اعضاي تيم براي رسيدن به هدف مشترك</span><span class="s" style="right:40.0px;transform-origin:100% 50%;top:442.0px;font-size:17px;line-height:22px;color:#FFFFFF;transform:scaleX(1.007);">هدف مشترك با يكديگر همكاري مي‌كنند</span></div></div></div>
<svg style="left:199px;top:692px" width="11" height="10" viewBox="0 0 11 10"><path d="M6.1 0.6L7.2 3.7H10.5L7.8 5.7L8.8 8.9L6.1 7L3.4 8.9L4.4 5.7L1.7 3.7H5Z" fill="#666"/><path d="M0.3 2.6L1.2 3.3M0.4 6.2L1.8 5.8" stroke="#555" stroke-width="1"/></svg>
<span class="num" style="left:298px;top:688px">20</span>
<div class="sl" style="left:433px;top:545px"><div class="bg"><svg class="sw" width="198" height="137" viewBox="0 0 198 137"><path d="M0 83 L62 104 C 95 106, 140 88, 198 48 L198 62 C 150 95, 110 112, 66 110 Z" fill="#fff" fill-opacity="0.13"/><path d="M0 83 L62 104 L60 106 Z" fill="#fff" fill-opacity="0.18"/><path d="M20 108 C 50 100, 80 112, 110 137 L 70 137 C 60 125, 40 112, 20 108 Z" fill="#fff" fill-opacity="0.05"/><path d="M0 96 C 30 100, 50 108, 62 118 C 40 112, 20 106, 0 104 Z" fill="#fff" fill-opacity="0.06"/></svg><div class="in"><span class="s" style="right:154.8px;transform-origin:100% 50%;top:16.0px;font-size:48.3px;line-height:63px;color:#CCFFFF;transform:scaleX(0.710);">نحوه برخورد با تيم‌سازي موثر</span><span class="s" style="right:53.2px;transform-origin:100% 50%;top:94.0px;font-size:23px;line-height:30px;color:#FFFFFF;transform:scaleX(0.852);">تفكر خود را در همراهي با ساختار تيمي توسط پرسشنامه زير بسنجيد. اين</span><span class="s" style="right:53.2px;transform-origin:100% 50%;top:130.4px;font-size:23px;line-height:30px;color:#FFFFFF;transform:scaleX(0.891);">مطالب به شما كمك خواهند كرد تا توانايي خود را ارزيابي، و مواردي كه</span><span class="s" style="right:53.2px;transform-origin:100% 50%;top:166.4px;font-size:23px;line-height:30px;color:#FFFFFF;transform:scaleX(0.930);">اصلاح و تغيير در آن‌ها سودمند خواهد بود را مشخص كنيد. نمره‌اي كه</span><span class="s" style="right:53.2px;transform-origin:100% 50%;top:204.4px;font-size:23px;line-height:30px;color:#FFFFFF;transform:scaleX(0.854);">منطبق با شما است را مشخص كنيد. هرچه نمره بالاتر باشد مشخصات شما</span><span class="s" style="right:53.2px;transform-origin:100% 50%;top:240.4px;font-size:23px;line-height:30px;color:#FFFFFF;transform:scaleX(0.924);">به متن نزديكتر است. در پايان نمره‌ها را با يكديگر جمع كنيد و در محل</span><span class="s" style="right:53.2px;transform-origin:100% 50%;top:278.0px;font-size:23px;line-height:30px;color:#FFFFFF;transform:scaleX(0.853);">مربوطه بنويسيد.</span><span class="s" style="right:53.2px;transform-origin:100% 50%;top:320.0px;font-size:23px;line-height:30px;color:#FFFFFF;transform:scaleX(0.956);">با مراجعه به قسمت تجزيه و تحليل داده‌ها، ميزان مهارت خود را در</span><span class="s" style="right:53.2px;transform-origin:100% 50%;top:356.4px;font-size:23px;line-height:30px;color:#FFFFFF;transform:scaleX(0.860);">تيم‌سازي تعيين كنيد. با توجه به پاسخ‌هاي خود زمينه‌هايي كه نيازمند بهبود</span><span class="s" style="right:53.2px;transform-origin:100% 50%;top:396.4px;font-size:23px;line-height:30px;color:#FFFFFF;transform:scaleX(0.878);">هستند را مشخص، و در جهت بهبود آن‌ها تلاش كنيد.</span></div></div></div>
<svg style="left:434px;top:692px" width="11" height="10" viewBox="0 0 11 10"><path d="M6.1 0.6L7.2 3.7H10.5L7.8 5.7L8.8 8.9L6.1 7L3.4 8.9L4.4 5.7L1.7 3.7H5Z" fill="#666"/><path d="M0.3 2.6L1.2 3.3M0.4 6.2L1.8 5.8" stroke="#555" stroke-width="1"/></svg>
<span class="num" style="left:533px;top:688px">19</span>
<div class="sl" style="left:668px;top:545px"><div class="bg"><svg class="sw" width="198" height="137" viewBox="0 0 198 137"><path d="M0 83 L62 104 C 95 106, 140 88, 198 48 L198 62 C 150 95, 110 112, 66 110 Z" fill="#fff" fill-opacity="0.13"/><path d="M0 83 L62 104 L60 106 Z" fill="#fff" fill-opacity="0.18"/><path d="M20 108 C 50 100, 80 112, 110 137 L 70 137 C 60 125, 40 112, 20 108 Z" fill="#fff" fill-opacity="0.05"/><path d="M0 96 C 30 100, 50 108, 62 118 C 40 112, 20 106, 0 104 Z" fill="#fff" fill-opacity="0.06"/></svg><svg class="sw" width="198" height="137" viewBox="0 0 198 137"><path d="M5.5 8.5 H197.5 V37.0 C 160 37.5, 130 39.0, 100 41.5 C 70 44.5, 40 45.0, 5.5 42.5 Z" fill="none" stroke="#FFFF00" stroke-width="1.15"/><path d="M5.5 53.5 H197.5 V82.0 C 160 82.5, 130 84.0, 100 86.5 C 70 89.5, 40 90.0, 5.5 87.5 Z" fill="none" stroke="#FFFF00" stroke-width="1.15"/><path d="M5.5 96.5 H197.5 V125.0 C 160 125.5, 130 127.0, 100 129.5 C 70 132.5, 40 133.0, 5.5 130.5 Z" fill="none" stroke="#FFFF00" stroke-width="1.15"/></svg><div class="in"><span class="s" style="right:35.2px;transform-origin:100% 50%;top:63.5px;font-size:32.2px;line-height:42px;color:#FFFFFF;transform:scaleX(0.853);">ايجاد ونگهداري كار تيمي مستلزم كوشش وتلاش است.</span><span class="s" style="right:96.8px;transform-origin:100% 50%;top:242.7px;font-size:32.2px;line-height:42px;color:#FFFFFF;transform:scaleX(0.876);">كار تيمي و بهره‌وري لازم و ملزوم يكديگرند.</span><span class="s" style="right:78.8px;transform-origin:100% 50%;top:415.1px;font-size:32.2px;line-height:42px;color:#FFFFFF;transform:scaleX(0.846);">نحوه رفتار شما نقش بسزايي در تيم سازي دارد.</span></div></div></div>
<svg style="left:669px;top:692px" width="11" height="10" viewBox="0 0 11 10"><path d="M6.1 0.6L7.2 3.7H10.5L7.8 5.7L8.8 8.9L6.1 7L3.4 8.9L4.4 5.7L1.7 3.7H5Z" fill="#666"/><path d="M0.3 2.6L1.2 3.3M0.4 6.2L1.8 5.8" stroke="#555" stroke-width="1"/></svg>
<span class="num" style="left:768px;top:688px">18</span>
<div class="sl" style="left:903px;top:545px"><div class="bg"><svg class="sw" width="198" height="137" viewBox="0 0 198 137"><path d="M0 83 L62 104 C 95 106, 140 88, 198 48 L198 62 C 150 95, 110 112, 66 110 Z" fill="#fff" fill-opacity="0.13"/><path d="M0 83 L62 104 L60 106 Z" fill="#fff" fill-opacity="0.18"/><path d="M20 108 C 50 100, 80 112, 110 137 L 70 137 C 60 125, 40 112, 20 108 Z" fill="#fff" fill-opacity="0.05"/><path d="M0 96 C 30 100, 50 108, 62 118 C 40 112, 20 106, 0 104 Z" fill="#fff" fill-opacity="0.06"/></svg><div class="in"><span class="s" style="right:169.2px;transform-origin:100% 50%;top:14.4px;font-size:50.6px;line-height:66px;color:#CCFFFF;transform:scaleX(0.645);">شاخص‌هاي اساسي در يك تيم</span><span class="s" style="right:56.8px;transform-origin:100% 50%;top:95.1px;font-size:21.8px;line-height:28px;color:#FFFFFF;transform:scaleX(0.776);">6. شناخت و قدرداني</span><span class="s" style="right:96.8px;transform-origin:100% 50%;top:129.3px;font-size:15.9px;line-height:21px;color:#FFFFFF;transform:scaleX(0.971);">مسئوليت نتايج كار را مي‌پذيرند افراد در گروه تنها به وظايف خود توجه دارند و كمتر</span><div class="a" style="left:714.2px;top:140.8px;width:6px;height:3px;background:#fff"></div><span class="s" style="right:96.8px;transform-origin:100% 50%;top:156.9px;font-size:15.9px;line-height:21px;color:#FFFFFF;transform:scaleX(0.951);">گروه تنها به وظايف خود توجه دارند و كمتر در تصميم‌گيري مشاركت مي‌كنند</span><div class="a" style="left:714.2px;top:168.4px;width:6px;height:3px;background:#fff"></div><span class="s" style="right:96.8px;transform-origin:100% 50%;top:188.9px;font-size:15.9px;line-height:21px;color:#FFFFFF;transform:scaleX(1.029);">و كمتر در تصميم‌گيري مشاركت مي‌كنند اعتماد متقابل و ارتباط باز ميان اعضا</span><div class="a" style="left:714.2px;top:200.4px;width:6px;height:3px;background:#fff"></div><span class="s" style="right:96.8px;transform-origin:100% 50%;top:216.5px;font-size:15.9px;line-height:21px;color:#FFFFFF;transform:scaleX(1.070);">متقابل و ارتباط باز ميان اعضا سبب بهبود عملكرد و افزايش</span><div class="a" style="left:714.2px;top:228.0px;width:6px;height:3px;background:#fff"></div><span class="s" style="right:96.8px;transform-origin:100% 50%;top:244.1px;font-size:15.9px;line-height:21px;color:#FFFFFF;transform:scaleX(1.089);">بهبود عملكرد و افزايش بهره‌وري</span><div class="a" style="left:714.2px;top:255.6px;width:6px;height:3px;background:#fff"></div><span class="s" style="right:53.2px;transform-origin:100% 50%;top:271.9px;font-size:21.8px;line-height:28px;color:#FFFFFF;transform:scaleX(0.857);">روحيه</span><span class="s" style="right:96.8px;transform-origin:100% 50%;top:308.5px;font-size:15.9px;line-height:21px;color:#FFFFFF;transform:scaleX(1.001);">مدير تيم نقش هماهنگ‌كننده دارد و از نظرات همه استفاده مي‌كند تعارض‌ها به صورت</span><div class="a" style="left:714.2px;top:320.0px;width:6px;height:3px;background:#fff"></div><span class="s" style="right:96.8px;transform-origin:100% 50%;top:361.3px;font-size:15.9px;line-height:21px;color:#FFFFFF;transform:scaleX(1.035);">نظرات همه استفاده مي‌كند تعارض‌ها به صورت سازنده حل</span><div class="a" style="left:714.2px;top:372.8px;width:6px;height:3px;background:#fff"></div><span class="s" style="right:96.8px;transform-origin:100% 50%;top:388.1px;font-size:15.9px;line-height:21px;color:#FFFFFF;transform:scaleX(0.962);">سازنده حل مي‌شوند و هر فرد مهارت‌هاي خود</span><div class="a" style="left:714.2px;top:399.6px;width:6px;height:3px;background:#fff"></div><span class="s" style="right:96.8px;transform-origin:100% 50%;top:417.3px;font-size:15.9px;line-height:21px;color:#FFFFFF;transform:scaleX(0.971);">خود را در اختيار ديگران قرار مي‌دهد تيم به رشد و توسعه مستمر خود</span><div class="a" style="left:714.2px;top:428.8px;width:6px;height:3px;background:#fff"></div><span class="s" style="right:96.8px;transform-origin:100% 50%;top:444.1px;font-size:15.9px;line-height:21px;color:#FFFFFF;transform:scaleX(0.984);">تيم به رشد و توسعه مستمر خود و اعضاي خود متعهد است اعضاي تيم براي</span><div class="a" style="left:714.2px;top:455.6px;width:6px;height:3px;background:#fff"></div><span class="s" style="right:96.8px;transform-origin:100% 50%;top:333.7px;font-size:15.9px;line-height:21px;color:#FFFFFF;transform:scaleX(1.110);">و اعضاي خود متعهد است</span></div></div></div>
<svg style="left:904px;top:692px" width="11" height="10" viewBox="0 0 11 10"><path d="M6.1 0.6L7.2 3.7H10.5L7.8 5.7L8.8 8.9L6.1 7L3.4 8.9L4.4 5.7L1.7 3.7H5Z" fill="#666"/><path d="M0.3 2.6L1.2 3.3M0.4 6.2L1.8 5.8" stroke="#555" stroke-width="1"/></svg>
<span class="num" style="left:1003px;top:688px">17</span>
<div class="sl" style="left:1138px;top:545px"><div class="bg"><svg class="sw" width="198" height="137" viewBox="0 0 198 137"><path d="M0 83 L62 104 C 95 106, 140 88, 198 48 L198 62 C 150 95, 110 112, 66 110 Z" fill="#fff" fill-opacity="0.13"/><path d="M0 83 L62 104 L60 106 Z" fill="#fff" fill-opacity="0.18"/><path d="M20 108 C 50 100, 80 112, 110 137 L 70 137 C 60 125, 40 112, 20 108 Z" fill="#fff" fill-opacity="0.05"/><path d="M0 96 C 30 100, 50 108, 62 118 C 40 112, 20 106, 0 104 Z" fill="#fff" fill-opacity="0.06"/></svg><div class="in"><span class="s" style="right:169.2px;transform-origin:100% 50%;top:4.8px;font-size:50.6px;line-height:66px;color:#CCFFFF;transform:scaleX(0.645);">شاخص‌هاي اساسي در يك تيم</span><span class="s" style="right:20.8px;transform-origin:100% 50%;top:67.5px;font-size:21.8px;line-height:28px;color:#FFFFFF;transform:scaleX(0.774);">3. روابط و ارتباطات</span><span class="s" style="right:56.8px;transform-origin:100% 50%;top:101.6px;font-size:14.8px;line-height:19px;color:#FFFFFF;transform:scaleX(1.007);">براي رسيدن به هدف مشترك با يكديگر همكاري مي‌كنند و مسئوليت</span><div class="a" style="left:752.2px;top:112.0px;width:6px;height:3px;background:#fff"></div><span class="s" style="right:56.8px;transform-origin:100% 50%;top:125.6px;font-size:14.8px;line-height:19px;color:#FFFFFF;transform:scaleX(0.955);">همكاري مي‌كنند و مسئوليت نتايج كار را مي‌پذيرند افراد در گروه تنها به وظايف</span><div class="a" style="left:752.2px;top:136.0px;width:6px;height:3px;background:#fff"></div><span class="s" style="right:56.8px;transform-origin:100% 50%;top:150.0px;font-size:14.8px;line-height:19px;color:#FFFFFF;transform:scaleX(0.966);">مي‌پذيرند افراد در گروه تنها به وظايف خود توجه دارند و كمتر در تصميم‌گيري</span><div class="a" style="left:752.2px;top:160.4px;width:6px;height:3px;background:#fff"></div><span class="s" style="right:56.8px;transform-origin:100% 50%;top:174.0px;font-size:14.8px;line-height:19px;color:#FFFFFF;transform:scaleX(1.024);">خود توجه دارند و كمتر در تصميم‌گيري مشاركت مي‌كنند اعتماد متقابل و ارتباط باز ميان اعضا سبب</span><div class="a" style="left:752.2px;top:184.4px;width:6px;height:3px;background:#fff"></div><span class="s" style="right:56.8px;transform-origin:100% 50%;top:198.0px;font-size:14.8px;line-height:19px;color:#FFFFFF;transform:scaleX(1.018);">مشاركت مي‌كنند اعتماد متقابل و ارتباط باز ميان اعضا سبب بهبود عملكرد و افزايش</span><div class="a" style="left:752.2px;top:208.4px;width:6px;height:3px;background:#fff"></div><span class="s" style="right:20.8px;transform-origin:100% 50%;top:218.3px;font-size:21.8px;line-height:28px;color:#FFFFFF;transform:scaleX(0.770);">4. انعطاف‌پذيري</span><span class="s" style="right:56.8px;transform-origin:100% 50%;top:250.0px;font-size:14.8px;line-height:19px;color:#FFFFFF;transform:scaleX(1.058);">ميان اعضا سبب بهبود عملكرد و افزايش بهره‌وري</span><div class="a" style="left:752.2px;top:260.4px;width:6px;height:3px;background:#fff"></div><span class="s" style="right:56.8px;transform-origin:100% 50%;top:274.0px;font-size:14.8px;line-height:19px;color:#FFFFFF;transform:scaleX(0.958);">بهره‌وري سازمان مي‌شود مدير تيم نقش هماهنگ‌كننده دارد و از نظرات همه استفاده</span><div class="a" style="left:752.2px;top:284.4px;width:6px;height:3px;background:#fff"></div><span class="s" style="right:56.8px;transform-origin:100% 50%;top:298.8px;font-size:14.8px;line-height:19px;color:#FFFFFF;transform:scaleX(1.017);">دارد و از نظرات همه استفاده مي‌كند تعارض‌ها به صورت سازنده حل</span><div class="a" style="left:752.2px;top:309.2px;width:6px;height:3px;background:#fff"></div><span class="s" style="right:56.8px;transform-origin:100% 50%;top:322.4px;font-size:14.8px;line-height:19px;color:#FFFFFF;transform:scaleX(0.980);">تعارض‌ها به صورت سازنده حل مي‌شوند و هر فرد مهارت‌هاي خود را در اختيار ديگران قرار مي‌دهد</span><div class="a" style="left:752.2px;top:332.8px;width:6px;height:3px;background:#fff"></div><span class="s" style="right:20.8px;transform-origin:100% 50%;top:343.1px;font-size:21.8px;line-height:28px;color:#FFFFFF;transform:scaleX(0.808);">5 . عملكرد بهينه</span><span class="s" style="right:56.8px;transform-origin:100% 50%;top:373.2px;font-size:14.8px;line-height:19px;color:#FFFFFF;transform:scaleX(1.004);">هر فرد مهارت‌هاي خود را در اختيار ديگران قرار مي‌دهد تيم به رشد</span><div class="a" style="left:752.2px;top:383.6px;width:6px;height:3px;background:#fff"></div><span class="s" style="right:56.8px;transform-origin:100% 50%;top:397.2px;font-size:14.8px;line-height:19px;color:#FFFFFF;transform:scaleX(1.011);">ديگران قرار مي‌دهد تيم به رشد و توسعه مستمر خود و اعضاي</span><div class="a" style="left:752.2px;top:407.6px;width:6px;height:3px;background:#fff"></div><span class="s" style="right:56.8px;transform-origin:100% 50%;top:422.0px;font-size:14.8px;line-height:19px;color:#FFFFFF;transform:scaleX(0.988);">توسعه مستمر خود و اعضاي خود متعهد است اعضاي تيم براي</span><div class="a" style="left:752.2px;top:432.4px;width:6px;height:3px;background:#fff"></div><span class="s" style="right:56.8px;transform-origin:100% 50%;top:445.6px;font-size:14.8px;line-height:19px;color:#FFFFFF;transform:scaleX(0.984);">است اعضاي تيم براي رسيدن به هدف مشترك با يكديگر همكاري مي‌كنند و مسئوليت نتايج كار را مي‌پذيرند</span><div class="a" style="left:752.2px;top:456.0px;width:6px;height:3px;background:#fff"></div><span class="s" style="right:56.8px;transform-origin:100% 50%;top:466.0px;font-size:14.8px;line-height:19px;color:#FFFFFF;transform:scaleX(0.992);">مشترك با يكديگر همكاري</span></div></div></div>
<svg style="left:1139px;top:692px" width="11" height="10" viewBox="0 0 11 10"><path d="M6.1 0.6L7.2 3.7H10.5L7.8 5.7L8.8 8.9L6.1 7L3.4 8.9L4.4 5.7L1.7 3.7H5Z" fill="#666"/><path d="M0.3 2.6L1.2 3.3M0.4 6.2L1.8 5.8" stroke="#555" stroke-width="1"/></svg>
<span class="num" style="left:1238px;top:688px">16</span>
<div class="a" style="left:0px;top:704px;width:1358px;height:21px;background:#F1F1F1"></div>
<div class="a" style="left:0px;top:703px;width:1358px;height:1px;background:#C6C6C6"></div>
<div class="a" style="left:0px;top:724px;width:1358px;height:1px;background:#FAFAFA"></div>
<span class="t" style="left:7.0px;top:704.0px;font-size:11.5px;letter-spacing:-0.131px;color:#444">Slide 53 of 53</span>
<svg style="left:96px;top:707px" width="15" height="13" viewBox="0 0 15 13"><path d="M0.6 0.6H6V10H0.6Z M6 0.6H11.5V4" fill="none" stroke="#555" stroke-width="1"/><path d="M6 10V12.5" stroke="#555" stroke-width="1"/><path d="M8 7L10 9.5L14 4" fill="none" stroke="#555" stroke-width="1.1"/></svg>
<span class="t" style="left:127.0px;top:704.0px;font-size:11.5px;letter-spacing:-0.092px;color:#444">English (United States)</span>
<svg style="left:1022px;top:707px" width="15" height="13" viewBox="0 0 15 13"><path d="M0.6 0.6H14.4V12.4H0.6Z M3.5 0.6V12.4 M3.5 3.5H14.4" fill="none" stroke="#666" stroke-width="1.1"/></svg>
<div class="a" style="left:1049px;top:704px;width:38px;height:21px;background:#C6C6C6"></div>
<svg style="left:1060px;top:707px" width="15" height="13" viewBox="0 0 15 13"><path d="M0.6 0.6H6V5H0.6Z M8.6 0.6H14V5H8.6Z M0.6 7.6H6V12H0.6Z M8.6 7.6H14V12H8.6Z" fill="none" stroke="#666" stroke-width="1.1"/></svg>
<svg style="left:1098px;top:707px" width="14" height="13" viewBox="0 0 14 13"><path d="M7 1.5C5 0 2 0 0.6 1V11.5C2 10.5 5 10.5 7 12C9 10.5 12 10.5 13.4 11.5V1C12 0 9 0 7 1.5Z M7 1.5V12" fill="none" stroke="#666" stroke-width="1"/><path d="M2 3.5H5.5M2 5.5H5.5M2 7.5H5.5M8.5 3.5H12M8.5 5.5H12M8.5 7.5H12" stroke="#666" stroke-width="0.8"/></svg>
<svg style="left:1137px;top:707px" width="13" height="14" viewBox="0 0 13 14"><path d="M0 0.6H13 M1.5 0.6V8H11.5V0.6 M6.5 8V13 M3.5 13.4H9.5" fill="none" stroke="#666" stroke-width="1.1"/></svg>
<div class="a" style="left:1168px;top:713px;width:6px;height:2px;background:#555"></div>
<div class="a" style="left:1178px;top:714px;width:100px;height:1px;background:#9a9a9a"></div>
<div class="a" style="left:1229px;top:711px;width:1px;height:6px;background:#9a9a9a"></div>
<div class="a" style="left:1212px;top:707px;width:4px;height:13px;background:#555"></div>
<svg style="left:1282px;top:710px" width="8" height="8" viewBox="0 0 8 8"><path d="M0 4H8M4 0V8" stroke="#555" stroke-width="1.8"/></svg>
<span class="t" style="left:1304.0px;top:704.0px;font-size:11.5px;letter-spacing:-0.383px;color:#444">76%</span>
<svg style="left:1347px;top:707px" width="14" height="14" viewBox="0 0 14 14"><path d="M0.6 0.6H13.4V13.4H0.6Z" fill="none" stroke="#666" stroke-width="1" stroke-dasharray="2 1.5"/><path d="M7 2.5V11.5M2.5 7H11.5M5.5 4L7 2.5L8.5 4M5.5 10L7 11.5L8.5 10M4 5.5L2.5 7L4 8.5M10 5.5L11.5 7L10 8.5" fill="none" stroke="#555" stroke-width="1"/></svg>
<div class="a" style="left:0px;top:725px;width:1358px;height:40px;background:linear-gradient(to right,#171412 0,#171412 29%,#1e1a17 36%,#151312 48%,#0f0e0e 66%,#121212 72%,#0b0b0b 80%,#0a0a0a 100%)"></div>
<div class="a" style="left:0px;top:725px;width:48px;height:40px;background:#0b0a0a"></div>
<svg style="left:16px;top:737px" width="17" height="17" viewBox="0 0 17 17"><path d="M0 2.4L6.8 1.4V8H0Z M7.8 1.3L17 0V8H7.8Z M0 9H6.8V15.6L0 14.6Z M7.8 9H17V17L7.8 15.7Z" fill="#fff"/></svg>
<div class="a" style="left:48px;top:725px;width:344px;height:40px;background:#333333"></div>
<svg style="left:56px;top:733px" width="24" height="24" viewBox="0 0 24 24"><circle cx="12" cy="12" r="9" fill="none" stroke="#fff" stroke-width="2.6"/></svg>
<span class="t" style="left:84.0px;top:736.0px;font-size:14.5px;letter-spacing:-0.035px;color:#d0d0d0">Type here to search</span>
<svg style="left:365px;top:736px" width="12" height="18" viewBox="0 0 12 18"><rect x="3.5" y="0.6" width="5" height="10" rx="2.5" fill="none" stroke="#bbb" stroke-width="1.1"/><path d="M1 8V9A5 5 0 0 0 11 9V8 M6 14V17 M3 17.2H9" fill="none" stroke="#bbb" stroke-width="1.1"/></svg>
<svg style="left:405px;top:737px" width="22" height="16" viewBox="0 0 22 16"><rect x="4.5" y="1" width="13" height="14" fill="none" stroke="#fff" stroke-width="1.6"/><path d="M2.5 2.5H0.8V13.5H2.5 M19.5 2.5H21.2V13.5H19.5" fill="none" stroke="#fff" stroke-width="1.4"/></svg>
<span class="t" style="left:456.0px;top:733.5px;font-size:42px;letter-spacing:0.000px;color:#0A84E0;height:44px;line-height:44px;top:720px"><b>e</b></span>
<svg style="left:507px;top:733px" width="17" height="24" viewBox="0 0 17 24"><ellipse cx="8.5" cy="12" rx="8.3" ry="11.8" fill="#003070"/><path d="M4.5 7.5L12 15.5L8.5 19V5L12 8.5L4.5 16.5" fill="none" stroke="#fff" stroke-width="1.5"/></svg>
<svg style="left:554px;top:735px" width="22" height="20" viewBox="0 0 22 20"><path d="M0 2H8L10 4H22V18H0Z" fill="#E9B93F"/><path d="M0 6H22V19H0Z" fill="#F8D775"/><path d="M5 12H17V19H14V15H8V19H5Z" fill="#3F9BE0"/></svg>
<svg style="left:604px;top:734px" width="22" height="22" viewBox="0 0 22 22"><path d="M6 1L21 4V15L6 12Z" fill="#7DB8E8" stroke="#d8e6f2" stroke-width="1"/><path d="M3 18L12 15.5L20 18L11 21Z" fill="#d5d5d5"/><path d="M11 13V16" stroke="#bbb" stroke-width="2"/></svg>
<svg style="left:651px;top:732px" width="27" height="27" viewBox="0 0 27 27"><circle cx="12" cy="13" r="11.5" fill="#DB4437"/><path d="M12 13L2.2 7A11.5 11.5 0 0 0 7 23.4Z" fill="#0F9D58"/><path d="M12 13L7 23.4A11.5 11.5 0 0 0 23.5 13Z" fill="#FFCD40"/><circle cx="12" cy="13" r="5.2" fill="#fff"/><circle cx="12" cy="13" r="4" fill="#4285F4"/><circle cx="19" cy="20" r="7" fill="#8fb3c9"/><path d="M13 22C15 19 17 21 19 18.5C21 21 23 20 25.5 22.5A7 7 0 0 1 13 22Z" fill="#4c7a4a"/><circle cx="19" cy="20" r="7" fill="none" stroke="#e8eef2" stroke-width="1"/></svg>
<svg style="left:700px;top:734px" width="23" height="22" viewBox="0 0 23 22"><rect x="9" y="2.5" width="13.5" height="17" fill="#fff" stroke="#2B579A" stroke-width="1"/><path d="M14 6H20.5M14 9H20.5M14 12H20.5M14 15H20.5" stroke="#2B579A" stroke-width="1.2"/><path d="M0 2.5L13 0V22L0 19.5Z" fill="#2B579A"/><text x="6.5" y="15.5" font-family="Liberation Sans, sans-serif" font-size="10.5" font-weight="bold" fill="#fff" text-anchor="middle">W</text></svg>
<div class="a" style="left:737px;top:725px;width:48px;height:40px;background:#464646"></div>
<svg style="left:750px;top:734px" width="23" height="22" viewBox="0 0 23 22"><rect x="9" y="2.5" width="13.5" height="17" fill="#fff" stroke="#D24726" stroke-width="1"/><rect x="14" y="5" width="6" height="4.5" fill="#D24726"/><path d="M14 12H20.5M14 15H20.5" stroke="#D24726" stroke-width="1.2"/><path d="M0 2.5L13 0V22L0 19.5Z" fill="#D24726"/><text x="6.5" y="15.5" font-family="Liberation Sans, sans-serif" font-size="11" font-weight="bold" fill="#fff" text-anchor="middle">P</text></svg>
<svg style="left:798px;top:732px" width="26" height="26" viewBox="0 0 26 26"><path d="M10 6C3 6 0 11 0 15.5C0 20.5 4.5 24 10.5 24C13 24 13 21.5 12 20C11 18 13 16.5 15.5 17C19.5 18 21.5 15.5 21 12.5C20.3 8.5 15.5 6 10 6Z" fill="#EBE7DD" stroke="#bfb9a8" stroke-width="0.8"/><circle cx="5" cy="12" r="1.9" fill="#E23B2E"/><circle cx="10" cy="9.8" r="1.9" fill="#F0C21B"/><circle cx="15.5" cy="11.5" r="1.9" fill="#3FA34D"/><circle cx="4.5" cy="17.5" r="1.9" fill="#2F7DD1"/><path d="M23.5 0.5L25.3 2L16 15L13.5 13.5Z" fill="#E58A2B"/><path d="M13.5 13.5L16 15L13 18.5L11.8 17.8Z" fill="#7a5a33"/></svg>
<div class="a" style="left:643px;top:763px;width:40px;height:2px;background:#F08DBA"></div>
<div class="a" style="left:692px;top:763px;width:40px;height:2px;background:#F08DBA"></div>
<div class="a" style="left:737px;top:763px;width:48px;height:2px;background:#F08DBA"></div>
<div class="a" style="left:790px;top:763px;width:40px;height:2px;background:#F08DBA"></div>
<svg style="left:1099px;top:740px" width="12" height="8" viewBox="0 0 12 8"><path d="M0.8 7L6 1.8L11.2 7" fill="none" stroke="#fff" stroke-width="1.3"/></svg>
<svg style="left:1124px;top:735px" width="12" height="20" viewBox="0 0 12 20"><ellipse cx="6" cy="10" rx="5.8" ry="9.6" fill="#003070"/><path d="M3 6.8L8.6 12.6L6 15.3V4.7L8.6 7.4L3 13.2" fill="none" stroke="#fff" stroke-width="1.2"/></svg>
<svg style="left:1145px;top:738px" width="17" height="14" viewBox="0 0 17 14"><path d="M0.6 4.8H3.5L7 1.2V12.8L3.5 9.2H0.6Z" fill="none" stroke="#fff" stroke-width="1.1"/><path d="M9.2 4.8A3 3 0 0 1 9.2 9.2" fill="none" stroke="#fff" stroke-width="1"/><path d="M11 3A5.5 5.5 0 0 1 11 11" fill="none" stroke="#c9c9c9" stroke-width="1"/><path d="M13 1.3A8 8 0 0 1 13 12.7" fill="none" stroke="#8a8a8a" stroke-width="1"/></svg>
<svg style="left:1169px;top:739px" width="18" height="13" viewBox="0 0 18 13"><rect x="5.6" y="2.6" width="10.5" height="7" fill="none" stroke="#fff" stroke-width="1.2"/><rect x="16.4" y="4.5" width="1.4" height="3.2" fill="#fff"/><rect x="7" y="4" width="6" height="4.2" fill="#fff"/><path d="M2.8 0V3 M0.5 2.5H5V5.5A2.2 2.2 0 0 1 0.5 5.5Z M2.8 7.5V12.5" fill="#fff" stroke="#fff" stroke-width="1"/></svg>
<svg style="left:1197px;top:738px" width="14" height="14" viewBox="0 0 14 14"><path d="M1 13A12 12 0 0 1 13 1" fill="none" stroke="#fff" stroke-width="1.2"/><path d="M4.5 13A8.5 8.5 0 0 1 13 4.5" fill="none" stroke="#fff" stroke-width="1.2"/><path d="M8 13A5 5 0 0 1 13 8" fill="none" stroke="#fff" stroke-width="1.2"/><circle cx="12" cy="12.2" r="1.3" fill="#fff"/></svg>
<span class="t" style="left:1220.0px;top:735.0px;font-size:10.5px;letter-spacing:-0.289px;color:#fff">ENG</span>
<span class="t" style="left:1261.0px;top:726.0px;font-size:12.5px;letter-spacing:-0.727px;color:#fff">5:14 PM</span>
<span class="t" style="left:1253.5px;top:744.0px;font-size:12.5px;letter-spacing:-0.415px;color:#fff">11/23/2024</span>
<svg style="left:1325px;top:737px" width="18" height="15" viewBox="0 0 18 15"><path d="M0.8 0.8H17.2V11.5H7L3.5 14.5V11.5H0.8Z" fill="#fff"/><path d="M3.5 4H14.5M3.5 6.5H14.5M3.5 9H10" stroke="#0b0b0b" stroke-width="0.9"/></svg>
<svg style="left:1334px;top:746px" width="14" height="14" viewBox="0 0 14 14"><circle cx="7" cy="7" r="6.3" fill="#2a2a2a" stroke="#e8e8e8" stroke-width="1"/><text x="7" y="10.6" font-family="Liberation Sans, sans-serif" font-size="10" fill="#fff" text-anchor="middle">2</text></svg>
<div class="a" style="left:0px;top:765px;width:1358px;height:8px;background:#fff"></div>
</body></html>
